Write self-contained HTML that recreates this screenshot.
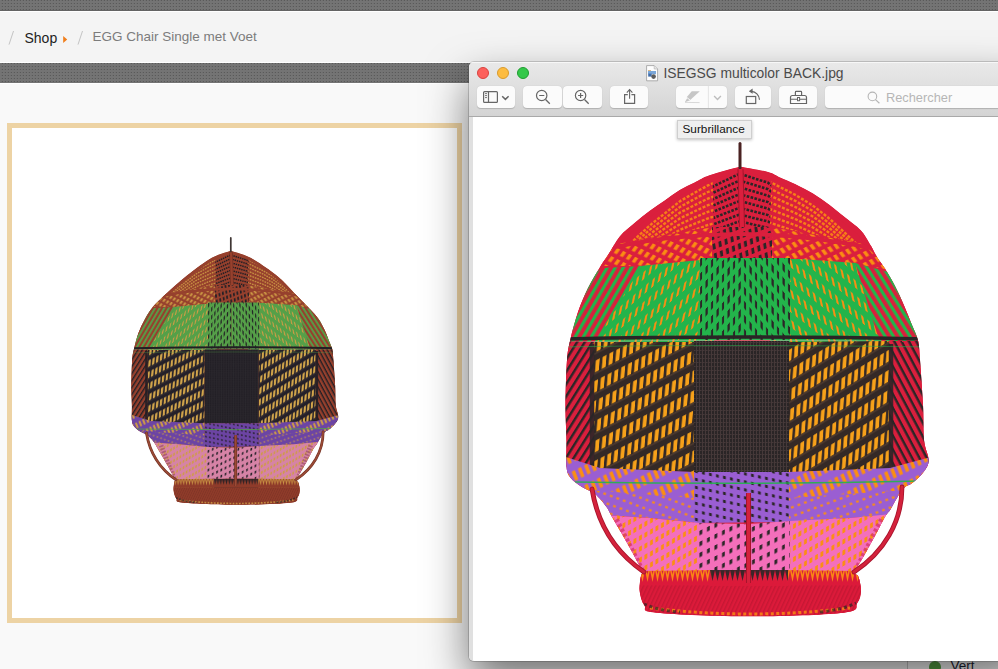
<!DOCTYPE html>
<html><head><meta charset="utf-8">
<style>
html,body{margin:0;padding:0}
body{width:998px;height:669px;overflow:hidden;background:#f9f9f9;position:relative;font-family:"Liberation Sans",sans-serif}
.a{position:absolute}
.btn{position:absolute;top:24px;height:22px;background:#fbfbfb;border-radius:4px;box-shadow:0 0.5px 1px rgba(0,0,0,0.18)}
</style></head><body>
<div class="a" style="left:0;top:0;width:998px;height:11px;overflow:hidden;background:#747474"><svg width="998" height="11" style="position:absolute;left:0;top:0;display:block">
<defs><pattern id="dpa" width="3" height="3" patternUnits="userSpaceOnUse">
<rect width="3" height="3" fill="#747474"/><rect x="1.5" y="0" width="2" height="1" fill="#5e5e5e" opacity=".45"/><rect x="2" y="0" width="1" height="1" fill="#5a5a5a"/>
</pattern></defs><rect width="998" height="11" fill="url(#dpa)"/></svg></div>
<div class="a" style="left:0;top:10px;width:998px;height:1px;background:#646464"></div>
<div class="a" style="left:0;top:11px;width:998px;height:1px;background:#fff"></div>
<div class="a" style="left:0;top:12px;width:998px;height:50px;background:#f4f4f4"></div>
<div class="a" style="left:0;top:62px;width:998px;height:1px;background:#fff"></div>
<div class="a" style="left:0;top:63px;width:998px;height:20px;overflow:hidden;background:#747474"><svg width="998" height="20" style="position:absolute;left:0;top:0;display:block">
<defs><pattern id="dpb" width="3" height="3" patternUnits="userSpaceOnUse">
<rect width="3" height="3" fill="#747474"/><rect x="1.5" y="0" width="2" height="1" fill="#5e5e5e" opacity=".45"/><rect x="2" y="0" width="1" height="1" fill="#5a5a5a"/>
</pattern></defs><rect width="998" height="20" fill="url(#dpb)"/></svg></div>
<div class="a" style="left:0;top:83px;width:998px;height:1px;background:#fff"></div>
<!-- breadcrumb -->
<svg class="a" style="left:0;top:25px" width="100" height="25"><path d="M13.5,6 L9,19.6" stroke="#c4c4c4" stroke-width="1"/><path d="M82.5,6 L78,19.6" stroke="#c4c4c4" stroke-width="1"/><path d="M63.2,11 L67.2,14.5 L63.2,18Z" fill="#f07d1a"/></svg>
<div class="a" style="left:24.5px;top:29.5px;font-size:14px;line-height:16px;color:#222">Shop</div>
<div class="a" style="left:92.5px;top:29px;font-size:13.5px;line-height:16px;color:#7c7c7c">EGG Chair Single met Voet</div>
<!-- product frame -->
<div class="a" style="left:7px;top:123px;width:445px;height:490px;border:5px solid #edd3a4;background:#fff"></div>
<svg class="a" style="left:0;top:0" width="998" height="669"><g transform="matrix(0.57,0,0,0.5646,-191.00,156.88)"><defs><clipPath id="clip_small"><path d="M739.5,166.7 C733.9,168.7 719.5,171.4 706.7,178.7 C693.9,186.0 676.0,199.9 662.5,210.6 C649.0,221.3 635.9,233.5 626.0,242.7 C616.1,251.9 609.2,258.4 603.0,266.0 C596.8,273.6 593.2,280.3 589.0,288.0 C584.8,295.7 581.1,303.5 578.0,312.0 C574.9,320.5 572.3,331.0 570.5,339.0 C568.7,347.0 567.8,349.0 567.0,360.0 C566.2,371.0 565.6,391.7 565.5,405.0 C565.4,418.3 566.3,429.7 566.5,440.0 C566.7,450.3 565.8,460.7 566.5,467.0 C567.2,473.3 568.1,474.7 570.7,478.0 C573.3,481.3 578.0,484.3 582.0,487.0 C586.0,489.7 590.9,490.7 595.0,494.0 C599.1,497.3 603.7,503.2 606.5,507.0 C609.3,510.8 609.4,512.5 612.0,517.0 C614.6,521.5 618.8,528.5 622.0,534.0 C625.2,539.5 628.3,545.2 631.0,550.0 C633.7,554.8 636.1,559.5 638.0,563.0 C639.9,566.5 641.9,568.7 642.4,571.0 C642.9,573.3 641.3,573.7 640.8,577.0 C640.3,580.3 639.0,586.2 639.6,591.0 C640.2,595.8 641.6,601.9 644.4,605.5 C647.2,609.1 638.9,610.9 656.5,612.7 C674.1,614.5 718.8,616.3 750.0,616.3 C781.2,616.3 826.1,614.9 844.0,612.7 C861.9,610.5 854.5,606.6 857.3,603.0 C860.1,599.4 860.8,595.3 861.0,591.0 C861.2,586.7 859.6,580.2 858.5,577.0 C857.4,573.8 853.8,575.4 854.6,572.0 C855.5,568.6 860.2,562.5 863.6,556.5 C867.0,550.5 871.2,542.9 874.8,536.3 C878.4,529.7 882.4,521.5 885.0,517.0 C887.6,512.5 888.5,512.6 890.5,509.4 C892.5,506.2 894.8,501.6 897.0,498.0 C899.2,494.4 901.3,490.6 904.0,488.0 C906.7,485.4 909.7,485.4 913.0,482.6 C916.3,479.8 921.4,475.2 924.0,471.4 C926.6,467.6 928.6,465.2 928.6,460.0 C928.6,454.8 924.9,449.2 924.0,440.0 C923.1,430.8 923.7,418.3 923.0,405.0 C922.3,391.7 920.8,370.8 920.0,360.0 C919.2,349.2 919.3,346.3 918.0,340.5 C916.7,334.7 914.3,330.8 912.0,325.0 C909.7,319.2 907.0,311.8 904.0,305.5 C901.0,299.2 898.3,293.1 894.0,287.0 C889.7,280.9 884.9,276.0 878.0,268.6 C871.1,261.2 862.3,252.4 852.8,242.7 C843.3,233.0 834.0,221.3 821.0,210.6 C808.0,199.9 788.1,186.0 774.7,178.7 C761.3,171.4 746.4,168.7 740.5,166.7 C734.6,164.7 745.1,164.7 739.5,166.7Z"/></clipPath>
<pattern id="od_small" width="6.8" height="20" patternUnits="userSpaceOnUse" patternTransform="skewY(-27) skewX(-5)">
 <rect width="6.8" height="20" fill="#25212a"/><rect x="0" y="16.5" width="6.8" height="1" fill="#3a3236"/><rect x="1.2" y="4" width="3.9" height="11.5" fill="#d3a64c"/></pattern>
<pattern id="odr_small" width="6.4" height="20" patternUnits="userSpaceOnUse" patternTransform="skewY(-31) skewX(-4)">
 <rect width="6.4" height="20" fill="#25212a"/><rect x="0" y="16.5" width="6.4" height="1" fill="#3a3236"/><rect x="1.1" y="4" width="3.8" height="11.5" fill="#d3a64c"/></pattern>
<pattern id="bsq_small" width="3" height="4" patternUnits="userSpaceOnUse">
 <rect width="3" height="4" fill="#221f25"/><rect x="0" y="0" width="1" height="4" fill="#2e2a30"/><rect x="1" y="2" width="1.5" height="1" fill="#2e2a30"/></pattern>
<pattern id="og_small" width="6.5" height="15" patternUnits="userSpaceOnUse" patternTransform="skewY(-40) skewX(-14)">
 <rect width="6.5" height="15" fill="#55a048"/><rect x="1" y="2" width="2.4" height="7.5" fill="#cf9c45"/></pattern>
<pattern id="ogr_small" width="6.5" height="15" patternUnits="userSpaceOnUse" patternTransform="skewY(38) skewX(14)">
 <rect width="6.5" height="15" fill="#55a048"/><rect x="1" y="2" width="2.4" height="7.5" fill="#cf9c45"/></pattern>
<pattern id="bg_small" width="5.5" height="14" patternUnits="userSpaceOnUse" patternTransform="skewY(-50)">
 <rect width="5.5" height="14" fill="#55a048"/><rect x="1.5" y="2" width="2.2" height="7.5" fill="#221f25"/></pattern>
<pattern id="bgr_small" width="5.5" height="14" patternUnits="userSpaceOnUse" patternTransform="skewY(50)">
 <rect width="5.5" height="14" fill="#55a048"/><rect x="1.5" y="2" width="2.2" height="7.5" fill="#221f25"/></pattern>
<pattern id="or_small" width="6" height="11" patternUnits="userSpaceOnUse" patternTransform="skewY(26) skewX(-28)">
 <rect width="6" height="11" fill="#96402d"/><rect x="1" y="2" width="3" height="6.5" fill="#cf9c45"/></pattern>
<pattern id="orr_small" width="6" height="11" patternUnits="userSpaceOnUse" patternTransform="skewY(-26) skewX(28)">
 <rect width="6" height="11" fill="#96402d"/><rect x="1" y="2" width="3" height="6.5" fill="#cf9c45"/></pattern>
<pattern id="br_small" width="6" height="10" patternUnits="userSpaceOnUse" patternTransform="skewY(-22) skewX(8)">
 <rect width="6" height="10" fill="#96402d"/><rect x="1.5" y="2" width="2.8" height="6" fill="#221f25"/></pattern>
<pattern id="rg_small" width="7" height="7" patternUnits="userSpaceOnUse" patternTransform="rotate(-60)">
 <rect width="7" height="7" fill="#96402d"/><rect x="0" y="0" width="7" height="3.2" fill="#55a048"/></pattern>
<pattern id="rgr_small" width="7" height="7" patternUnits="userSpaceOnUse" patternTransform="rotate(58)">
 <rect width="7" height="7" fill="#96402d"/><rect x="0" y="0" width="7" height="3.2" fill="#55a048"/></pattern>
<pattern id="rb_small" width="6.5" height="6.5" patternUnits="userSpaceOnUse" patternTransform="rotate(-58)">
 <rect width="6.5" height="6.5" fill="#96402d"/><rect x="0" y="0" width="6.5" height="2.4" fill="#221f25"/></pattern>
<pattern id="rbr_small" width="6.5" height="6.5" patternUnits="userSpaceOnUse" patternTransform="rotate(62)">
 <rect width="6.5" height="6.5" fill="#96402d"/><rect x="0" y="0" width="6.5" height="2.4" fill="#221f25"/></pattern>
<pattern id="op_small" width="6.5" height="9" patternUnits="userSpaceOnUse" patternTransform="skewY(20) skewX(-20)">
 <rect width="6.5" height="9" fill="#6c44a4"/><rect x="1" y="2.5" width="2.6" height="2.2" fill="#cf9c45"/></pattern>
<pattern id="opr_small" width="6.5" height="9" patternUnits="userSpaceOnUse" patternTransform="skewY(-20) skewX(20)">
 <rect width="6.5" height="9" fill="#6c44a4"/><rect x="1" y="2.5" width="2.6" height="2.2" fill="#cf9c45"/></pattern>
<pattern id="opu_small" width="6.2" height="20" patternUnits="userSpaceOnUse" patternTransform="skewY(-27) skewX(18)">
 <rect width="6.2" height="20" fill="#6c44a4"/><rect x="1.3" y="3" width="3.2" height="11" fill="#cf9c45"/></pattern>
<pattern id="bp_small" width="7" height="8" patternUnits="userSpaceOnUse" patternTransform="skewY(12)">
 <rect width="7" height="8" fill="#6c44a4"/><rect x="2" y="2" width="2.8" height="3" fill="#221f25"/></pattern>
<pattern id="opk_small" width="5.5" height="11" patternUnits="userSpaceOnUse" patternTransform="skewY(-30)">
 <rect width="5.5" height="11" fill="#d683a6"/><rect x="1" y="3" width="2.8" height="5" fill="#cf9c45"/></pattern>
<pattern id="opkr_small" width="5.5" height="11" patternUnits="userSpaceOnUse" patternTransform="skewY(-30)">
 <rect width="5.5" height="11" fill="#d683a6"/><rect x="1" y="3" width="2.8" height="5" fill="#cf9c45"/></pattern>
<pattern id="bpk_small" width="7.5" height="11" patternUnits="userSpaceOnUse" patternTransform="skewY(-26)">
 <rect width="7.5" height="11" fill="#d683a6"/><rect x="2" y="3" width="2.8" height="4.5" fill="#221f25"/></pattern>
<pattern id="bpkr_small" width="7.5" height="11" patternUnits="userSpaceOnUse" patternTransform="skewY(-26)">
 <rect width="7.5" height="11" fill="#d683a6"/><rect x="2" y="3" width="2.8" height="4.5" fill="#221f25"/></pattern>
<pattern id="zz_small" width="5" height="16" patternUnits="userSpaceOnUse" patternTransform="translate(0,570)">
 <rect width="5" height="16" fill="#8f3b2a"/><path d="M0,0 L2.5,12 L5,0Z" fill="#cf9c45"/><path d="M1.5,0 L2.5,5 L3.5,0Z" fill="#96402d"/></pattern>
<pattern id="zzb_small" width="5" height="16" patternUnits="userSpaceOnUse" patternTransform="translate(0,570)">
 <rect width="5" height="16" fill="#8f3b2a"/><path d="M0,0 L2.5,11 L5,0Z" fill="#221f25"/></pattern>
<pattern id="rbase_small" width="4" height="5" patternUnits="userSpaceOnUse" patternTransform="skewX(-25)">
 <rect width="4" height="5" fill="#8f3b2a"/><rect x="0" y="0" width="1.5" height="5" fill="#6e2f22" opacity="0.45"/></pattern>
</defs>
<g clip-path="url(#clip_small)"><path d="M739.5,166.7 C733.9,168.7 719.5,171.4 706.7,178.7 C693.9,186.0 676.0,199.9 662.5,210.6 C649.0,221.3 635.9,233.5 626.0,242.7 C616.1,251.9 609.2,258.4 603.0,266.0 C596.8,273.6 593.2,280.3 589.0,288.0 C584.8,295.7 581.1,303.5 578.0,312.0 C574.9,320.5 572.3,331.0 570.5,339.0 C568.7,347.0 567.8,349.0 567.0,360.0 C566.2,371.0 565.6,391.7 565.5,405.0 C565.4,418.3 566.3,429.7 566.5,440.0 C566.7,450.3 565.8,460.7 566.5,467.0 C567.2,473.3 568.1,474.7 570.7,478.0 C573.3,481.3 578.0,484.3 582.0,487.0 C586.0,489.7 590.9,490.7 595.0,494.0 C599.1,497.3 603.7,503.2 606.5,507.0 C609.3,510.8 609.4,512.5 612.0,517.0 C614.6,521.5 618.8,528.5 622.0,534.0 C625.2,539.5 628.3,545.2 631.0,550.0 C633.7,554.8 636.1,559.5 638.0,563.0 C639.9,566.5 641.9,568.7 642.4,571.0 C642.9,573.3 641.3,573.7 640.8,577.0 C640.3,580.3 639.0,586.2 639.6,591.0 C640.2,595.8 641.6,601.9 644.4,605.5 C647.2,609.1 638.9,610.9 656.5,612.7 C674.1,614.5 718.8,616.3 750.0,616.3 C781.2,616.3 826.1,614.9 844.0,612.7 C861.9,610.5 854.5,606.6 857.3,603.0 C860.1,599.4 860.8,595.3 861.0,591.0 C861.2,586.7 859.6,580.2 858.5,577.0 C857.4,573.8 853.8,575.4 854.6,572.0 C855.5,568.6 860.2,562.5 863.6,556.5 C867.0,550.5 871.2,542.9 874.8,536.3 C878.4,529.7 882.4,521.5 885.0,517.0 C887.6,512.5 888.5,512.6 890.5,509.4 C892.5,506.2 894.8,501.6 897.0,498.0 C899.2,494.4 901.3,490.6 904.0,488.0 C906.7,485.4 909.7,485.4 913.0,482.6 C916.3,479.8 921.4,475.2 924.0,471.4 C926.6,467.6 928.6,465.2 928.6,460.0 C928.6,454.8 924.9,449.2 924.0,440.0 C923.1,430.8 923.7,418.3 923.0,405.0 C922.3,391.7 920.8,370.8 920.0,360.0 C919.2,349.2 919.3,346.3 918.0,340.5 C916.7,334.7 914.3,330.8 912.0,325.0 C909.7,319.2 907.0,311.8 904.0,305.5 C901.0,299.2 898.3,293.1 894.0,287.0 C889.7,280.9 884.9,276.0 878.0,268.6 C871.1,261.2 862.3,252.4 852.8,242.7 C843.3,233.0 834.0,221.3 821.0,210.6 C808.0,199.9 788.1,186.0 774.7,178.7 C761.3,171.4 746.4,168.7 740.5,166.7 C734.6,164.7 745.1,164.7 739.5,166.7Z" fill="#96402d"/>
<clipPath id="capL_small"><path d="M560.0,160.0 L712.0,160.0 L714.0,226.0 L617.0,244.0 L560.0,262.0Z"/></clipPath>
<clipPath id="capR_small"><path d="M772.0,160.0 L935.0,160.0 L935.0,262.0 L864.0,244.0 L770.0,226.0Z"/></clipPath>
<clipPath id="capC_small"><path d="M712.0,160.0 L772.0,160.0 L770.0,227.0 L714.0,227.0Z"/></clipPath>
<g clip-path="url(#capL_small)"><path d="M568.0,390.1 L572.0,366.6 L576.0,350.1 L580.0,336.3 L584.0,325.2 L588.0,314.2 L592.0,306.1 L596.0,298.1 L600.0,290.0 L604.0,283.0 L608.0,276.0 L612.0,268.9 L616.0,261.7 L620.0,254.5 L624.0,250.4 L628.0,246.2 L632.0,242.1 L636.0,238.1 L640.0,234.4 L644.0,230.8 L648.0,227.1 L652.0,223.6 L656.0,220.4 L660.0,217.2 L664.0,214.0 L668.0,210.8 L672.0,207.6 L676.0,204.4 L680.0,201.2 L684.0,198.9 L688.0,196.6 L692.0,194.3 L696.0,192.0 L700.0,189.8 L704.0,187.6 L708.0,185.4 L712.0,183.7 L716.0,182.4 L720.0,181.1 L724.0,179.8 L728.0,178.5 L732.0,177.2 L736.0,175.8 L740.0,174.8 L744.0,175.7 L748.0,176.5 L752.0,177.4 L756.0,178.2 L760.0,179.1 L764.0,179.9 L768.0,180.8 L772.0,182.9 L776.0,185.0 L780.0,187.1 L784.0,189.1 L788.0,191.1 L792.0,193.1 L796.0,195.2 L800.0,197.7 L804.0,200.1 L808.0,202.6 L812.0,205.0 L816.0,208.0 L820.0,211.2 L824.0,214.3 L828.0,217.5 L832.0,221.0 L836.0,224.7 L840.0,228.4 L844.0,232.0 L848.0,235.8 L852.0,239.6 L856.0,243.4 L860.0,247.2 L864.0,253.5 L868.0,260.3 L872.0,268.0 L876.0,276.3 L880.0,283.5 L884.0,290.2 L888.0,297.9 L892.0,305.9 L896.0,314.4 L900.0,324.4 L904.0,334.3 L908.0,345.5 L912.0,356.7 L916.0,368.6 M568.0,385.3 L572.0,363.1 L576.0,347.5 L580.0,334.4 L584.0,324.0 L588.0,313.6 L592.0,306.0 L596.0,298.4 L600.0,290.8 L604.0,284.2 L608.0,277.6 L612.0,270.8 L616.0,264.0 L620.0,257.3 L624.0,253.4 L628.0,249.4 L632.0,245.5 L636.0,241.8 L640.0,238.3 L644.0,234.8 L648.0,231.3 L652.0,228.1 L656.0,225.1 L660.0,222.1 L664.0,219.0 L668.0,216.0 L672.0,212.9 L676.0,209.9 L680.0,206.9 L684.0,204.7 L688.0,202.6 L692.0,200.4 L696.0,198.2 L700.0,196.1 L704.0,194.0 L708.0,192.0 L712.0,190.4 L716.0,189.2 L720.0,187.9 L724.0,186.7 L728.0,185.4 L732.0,184.2 L736.0,183.0 L740.0,182.0 L744.0,182.8 L748.0,183.6 L752.0,184.4 L756.0,185.2 L760.0,186.0 L764.0,186.8 L768.0,187.7 L772.0,189.6 L776.0,191.6 L780.0,193.6 L784.0,195.5 L788.0,197.4 L792.0,199.3 L796.0,201.3 L800.0,203.6 L804.0,205.9 L808.0,208.2 L812.0,210.5 L816.0,213.3 L820.0,216.3 L824.0,219.3 L828.0,222.3 L832.0,225.6 L836.0,229.1 L840.0,232.6 L844.0,236.0 L848.0,239.6 L852.0,243.2 L856.0,246.8 L860.0,250.3 L864.0,256.3 L868.0,262.8 L872.0,270.0 L876.0,277.8 L880.0,284.6 L884.0,290.9 L888.0,298.2 L892.0,305.8 L896.0,313.8 L900.0,323.2 L904.0,332.6 L908.0,343.2 L912.0,353.8 L916.0,365.0 M568.0,380.4 L572.0,359.6 L576.0,344.9 L580.0,332.6 L584.0,322.8 L588.0,313.0 L592.0,305.8 L596.0,298.7 L600.0,291.5 L604.0,285.3 L608.0,279.1 L612.0,272.8 L616.0,266.3 L620.0,260.0 L624.0,256.3 L628.0,252.6 L632.0,249.0 L636.0,245.4 L640.0,242.2 L644.0,238.9 L648.0,235.6 L652.0,232.6 L656.0,229.7 L660.0,226.9 L664.0,224.0 L668.0,221.2 L672.0,218.3 L676.0,215.4 L680.0,212.6 L684.0,210.6 L688.0,208.5 L692.0,206.5 L696.0,204.5 L700.0,202.5 L704.0,200.5 L708.0,198.6 L712.0,197.1 L716.0,195.9 L720.0,194.8 L724.0,193.6 L728.0,192.4 L732.0,191.3 L736.0,190.1 L740.0,189.2 L744.0,190.0 L748.0,190.7 L752.0,191.5 L756.0,192.2 L760.0,193.0 L764.0,193.8 L768.0,194.5 L772.0,196.4 L776.0,198.3 L780.0,200.1 L784.0,201.9 L788.0,203.7 L792.0,205.4 L796.0,207.3 L800.0,209.5 L804.0,211.7 L808.0,213.9 L812.0,216.0 L816.0,218.7 L820.0,221.5 L824.0,224.3 L828.0,227.1 L832.0,230.2 L836.0,233.5 L840.0,236.8 L844.0,240.0 L848.0,243.4 L852.0,246.7 L856.0,250.1 L860.0,253.5 L864.0,259.1 L868.0,265.2 L872.0,272.0 L876.0,279.3 L880.0,285.7 L884.0,291.7 L888.0,298.5 L892.0,305.6 L896.0,313.2 L900.0,322.0 L904.0,330.9 L908.0,340.8 L912.0,350.8 L916.0,361.3 M568.0,375.6 L572.0,356.0 L576.0,342.3 L580.0,330.8 L584.0,321.6 L588.0,312.4 L592.0,305.7 L596.0,299.0 L600.0,292.3 L604.0,286.5 L608.0,280.7 L612.0,274.7 L616.0,268.7 L620.0,262.7 L624.0,259.3 L628.0,255.8 L632.0,252.4 L636.0,249.1 L640.0,246.0 L644.0,243.0 L648.0,239.9 L652.0,237.0 L656.0,234.4 L660.0,231.7 L664.0,229.0 L668.0,226.3 L672.0,223.7 L676.0,221.0 L680.0,218.4 L684.0,216.4 L688.0,214.5 L692.0,212.6 L696.0,210.7 L700.0,208.8 L704.0,207.0 L708.0,205.2 L712.0,203.8 L716.0,202.7 L720.0,201.6 L724.0,200.5 L728.0,199.4 L732.0,198.3 L736.0,197.3 L740.0,196.4 L744.0,197.1 L748.0,197.8 L752.0,198.5 L756.0,199.2 L760.0,199.9 L764.0,200.7 L768.0,201.4 L772.0,203.1 L776.0,204.9 L780.0,206.6 L784.0,208.3 L788.0,210.0 L792.0,211.6 L796.0,213.4 L800.0,215.4 L804.0,217.5 L808.0,219.5 L812.0,221.5 L816.0,224.0 L820.0,226.7 L824.0,229.3 L828.0,231.9 L832.0,234.8 L836.0,237.9 L840.0,241.0 L844.0,244.0 L848.0,247.2 L852.0,250.3 L856.0,253.5 L860.0,256.6 L864.0,261.9 L868.0,267.6 L872.0,274.0 L876.0,280.9 L880.0,286.8 L884.0,292.4 L888.0,298.8 L892.0,305.5 L896.0,312.6 L900.0,320.9 L904.0,329.2 L908.0,338.5 L912.0,347.8 L916.0,357.7 M568.0,370.7 L572.0,352.5 L576.0,339.7 L580.0,328.9 L584.0,320.4 L588.0,311.8 L592.0,305.6 L596.0,299.3 L600.0,293.1 L604.0,287.6 L608.0,282.2 L612.0,276.6 L616.0,271.0 L620.0,265.5 L624.0,262.3 L628.0,259.0 L632.0,255.8 L636.0,252.7 L640.0,249.9 L644.0,247.0 L648.0,244.2 L652.0,241.5 L656.0,239.0 L660.0,236.5 L664.0,234.0 L668.0,231.5 L672.0,229.0 L676.0,226.5 L680.0,224.1 L684.0,222.3 L688.0,220.5 L692.0,218.7 L696.0,216.9 L700.0,215.2 L704.0,213.5 L708.0,211.8 L712.0,210.5 L716.0,209.5 L720.0,208.4 L724.0,207.4 L728.0,206.4 L732.0,205.4 L736.0,204.4 L740.0,203.6 L744.0,204.2 L748.0,204.9 L752.0,205.6 L756.0,206.2 L760.0,206.9 L764.0,207.6 L768.0,208.2 L772.0,209.9 L776.0,211.5 L780.0,213.1 L784.0,214.7 L788.0,216.2 L792.0,217.8 L796.0,219.4 L800.0,221.3 L804.0,223.2 L808.0,225.1 L812.0,227.0 L816.0,229.4 L820.0,231.8 L824.0,234.3 L828.0,236.7 L832.0,239.4 L836.0,242.3 L840.0,245.2 L844.0,248.0 L848.0,251.0 L852.0,253.9 L856.0,256.8 L860.0,259.8 L864.0,264.7 L868.0,270.0 L872.0,275.9 L876.0,282.4 L880.0,288.0 L884.0,293.2 L888.0,299.1 L892.0,305.4 L896.0,312.0 L900.0,319.7 L904.0,327.4 L908.0,336.1 L912.0,344.8 L916.0,354.1 M568.0,365.9 L572.0,349.0 L576.0,337.1 L580.0,327.1 L584.0,319.2 L588.0,311.2 L592.0,305.4 L596.0,299.6 L600.0,293.8 L604.0,288.8 L608.0,283.7 L612.0,278.6 L616.0,273.4 L620.0,268.2 L624.0,265.2 L628.0,262.2 L632.0,259.3 L636.0,256.4 L640.0,253.7 L644.0,251.1 L648.0,248.4 L652.0,246.0 L656.0,243.7 L660.0,241.3 L664.0,239.0 L668.0,236.7 L672.0,234.4 L676.0,232.1 L680.0,229.8 L684.0,228.1 L688.0,226.5 L692.0,224.8 L696.0,223.2 L700.0,221.6 L704.0,220.0 L708.0,218.4 L712.0,217.2 L716.0,216.2 L720.0,215.3 L724.0,214.4 L728.0,213.4 L732.0,212.5 L736.0,211.5 L740.0,210.8 L744.0,211.4 L748.0,212.0 L752.0,212.6 L756.0,213.2 L760.0,213.9 L764.0,214.5 L768.0,215.1 L772.0,216.6 L776.0,218.1 L780.0,219.6 L784.0,221.1 L788.0,222.5 L792.0,224.0 L796.0,225.5 L800.0,227.2 L804.0,229.0 L808.0,230.8 L812.0,232.5 L816.0,234.7 L820.0,237.0 L824.0,239.3 L828.0,241.5 L832.0,244.1 L836.0,246.7 L840.0,249.4 L844.0,252.0 L848.0,254.7 L852.0,257.5 L856.0,260.2 L860.0,262.9 L864.0,267.5 L868.0,272.4 L872.0,277.9 L876.0,283.9 L880.0,289.1 L884.0,293.9 L888.0,299.5 L892.0,305.2 L896.0,311.3 L900.0,318.5 L904.0,325.7 L908.0,333.8 L912.0,341.9 L916.0,350.4 M568.0,361.1 L572.0,345.5 L576.0,334.5 L580.0,325.3 L584.0,317.9 L588.0,310.6 L592.0,305.3 L596.0,299.9 L600.0,294.6 L604.0,289.9 L608.0,285.3 L612.0,280.5 L616.0,275.7 L620.0,270.9 L624.0,268.2 L628.0,265.5 L632.0,262.7 L636.0,260.0 L640.0,257.6 L644.0,255.2 L648.0,252.7 L652.0,250.4 L656.0,248.3 L660.0,246.2 L664.0,244.0 L668.0,241.9 L672.0,239.8 L676.0,237.6 L680.0,235.5 L684.0,234.0 L688.0,232.4 L692.0,230.9 L696.0,229.4 L700.0,227.9 L704.0,226.5 L708.0,225.0 L712.0,223.9 L716.0,223.0 L720.0,222.1 L724.0,221.3 L728.0,220.4 L732.0,219.5 L736.0,218.7 L740.0,218.0 L744.0,218.5 L748.0,219.1 L752.0,219.7 L756.0,220.2 L760.0,220.8 L764.0,221.4 L768.0,222.0 L772.0,223.4 L776.0,224.8 L780.0,226.2 L784.0,227.5 L788.0,228.8 L792.0,230.1 L796.0,231.5 L800.0,233.2 L804.0,234.8 L808.0,236.4 L812.0,238.1 L816.0,240.0 L820.0,242.1 L824.0,244.2 L828.0,246.3 L832.0,248.7 L836.0,251.1 L840.0,253.6 L844.0,256.0 L848.0,258.5 L852.0,261.0 L856.0,263.6 L860.0,266.1 L864.0,270.3 L868.0,274.8 L872.0,279.9 L876.0,285.4 L880.0,290.2 L884.0,294.7 L888.0,299.8 L892.0,305.1 L896.0,310.7 L900.0,317.4 L904.0,324.0 L908.0,331.4 L912.0,338.9 L916.0,346.8 M568.0,356.2 L572.0,341.9 L576.0,331.9 L580.0,323.5 L584.0,316.7 L588.0,310.0 L592.0,305.1 L596.0,300.2 L600.0,295.3 L604.0,291.1 L608.0,286.8 L612.0,282.4 L616.0,278.0 L620.0,273.7 L624.0,271.2 L628.0,268.7 L632.0,266.1 L636.0,263.7 L640.0,261.5 L644.0,259.2 L648.0,257.0 L652.0,254.9 L656.0,252.9 L660.0,251.0 L664.0,249.0 L668.0,247.1 L672.0,245.1 L676.0,243.2 L680.0,241.2 L684.0,239.8 L688.0,238.4 L692.0,237.0 L696.0,235.6 L700.0,234.3 L704.0,232.9 L708.0,231.6 L712.0,230.6 L716.0,229.8 L720.0,229.0 L724.0,228.2 L728.0,227.4 L732.0,226.6 L736.0,225.8 L740.0,225.2 L744.0,225.7 L748.0,226.2 L752.0,226.7 L756.0,227.2 L760.0,227.8 L764.0,228.3 L768.0,228.8 L772.0,230.1 L776.0,231.4 L780.0,232.7 L784.0,233.9 L788.0,235.1 L792.0,236.3 L796.0,237.6 L800.0,239.1 L804.0,240.6 L808.0,242.1 L812.0,243.6 L816.0,245.4 L820.0,247.3 L824.0,249.2 L828.0,251.1 L832.0,253.3 L836.0,255.5 L840.0,257.8 L844.0,260.0 L848.0,262.3 L852.0,264.6 L856.0,266.9 L860.0,269.2 L864.0,273.1 L868.0,277.2 L872.0,281.9 L876.0,286.9 L880.0,291.3 L884.0,295.4 L888.0,300.1 L892.0,305.0 L896.0,310.1 L900.0,316.2 L904.0,322.3 L908.0,329.1 L912.0,335.9 L916.0,343.1" stroke="#cf9c45" stroke-width="2.4" stroke-dasharray="3 1.6" fill="none" opacity="0.85"/></g>
<g clip-path="url(#capR_small)"><path d="M568.0,390.1 L572.0,366.6 L576.0,350.1 L580.0,336.3 L584.0,325.2 L588.0,314.2 L592.0,306.1 L596.0,298.1 L600.0,290.0 L604.0,283.0 L608.0,276.0 L612.0,268.9 L616.0,261.7 L620.0,254.5 L624.0,250.4 L628.0,246.2 L632.0,242.1 L636.0,238.1 L640.0,234.4 L644.0,230.8 L648.0,227.1 L652.0,223.6 L656.0,220.4 L660.0,217.2 L664.0,214.0 L668.0,210.8 L672.0,207.6 L676.0,204.4 L680.0,201.2 L684.0,198.9 L688.0,196.6 L692.0,194.3 L696.0,192.0 L700.0,189.8 L704.0,187.6 L708.0,185.4 L712.0,183.7 L716.0,182.4 L720.0,181.1 L724.0,179.8 L728.0,178.5 L732.0,177.2 L736.0,175.8 L740.0,174.8 L744.0,175.7 L748.0,176.5 L752.0,177.4 L756.0,178.2 L760.0,179.1 L764.0,179.9 L768.0,180.8 L772.0,182.9 L776.0,185.0 L780.0,187.1 L784.0,189.1 L788.0,191.1 L792.0,193.1 L796.0,195.2 L800.0,197.7 L804.0,200.1 L808.0,202.6 L812.0,205.0 L816.0,208.0 L820.0,211.2 L824.0,214.3 L828.0,217.5 L832.0,221.0 L836.0,224.7 L840.0,228.4 L844.0,232.0 L848.0,235.8 L852.0,239.6 L856.0,243.4 L860.0,247.2 L864.0,253.5 L868.0,260.3 L872.0,268.0 L876.0,276.3 L880.0,283.5 L884.0,290.2 L888.0,297.9 L892.0,305.9 L896.0,314.4 L900.0,324.4 L904.0,334.3 L908.0,345.5 L912.0,356.7 L916.0,368.6 M568.0,385.3 L572.0,363.1 L576.0,347.5 L580.0,334.4 L584.0,324.0 L588.0,313.6 L592.0,306.0 L596.0,298.4 L600.0,290.8 L604.0,284.2 L608.0,277.6 L612.0,270.8 L616.0,264.0 L620.0,257.3 L624.0,253.4 L628.0,249.4 L632.0,245.5 L636.0,241.8 L640.0,238.3 L644.0,234.8 L648.0,231.3 L652.0,228.1 L656.0,225.1 L660.0,222.1 L664.0,219.0 L668.0,216.0 L672.0,212.9 L676.0,209.9 L680.0,206.9 L684.0,204.7 L688.0,202.6 L692.0,200.4 L696.0,198.2 L700.0,196.1 L704.0,194.0 L708.0,192.0 L712.0,190.4 L716.0,189.2 L720.0,187.9 L724.0,186.7 L728.0,185.4 L732.0,184.2 L736.0,183.0 L740.0,182.0 L744.0,182.8 L748.0,183.6 L752.0,184.4 L756.0,185.2 L760.0,186.0 L764.0,186.8 L768.0,187.7 L772.0,189.6 L776.0,191.6 L780.0,193.6 L784.0,195.5 L788.0,197.4 L792.0,199.3 L796.0,201.3 L800.0,203.6 L804.0,205.9 L808.0,208.2 L812.0,210.5 L816.0,213.3 L820.0,216.3 L824.0,219.3 L828.0,222.3 L832.0,225.6 L836.0,229.1 L840.0,232.6 L844.0,236.0 L848.0,239.6 L852.0,243.2 L856.0,246.8 L860.0,250.3 L864.0,256.3 L868.0,262.8 L872.0,270.0 L876.0,277.8 L880.0,284.6 L884.0,290.9 L888.0,298.2 L892.0,305.8 L896.0,313.8 L900.0,323.2 L904.0,332.6 L908.0,343.2 L912.0,353.8 L916.0,365.0 M568.0,380.4 L572.0,359.6 L576.0,344.9 L580.0,332.6 L584.0,322.8 L588.0,313.0 L592.0,305.8 L596.0,298.7 L600.0,291.5 L604.0,285.3 L608.0,279.1 L612.0,272.8 L616.0,266.3 L620.0,260.0 L624.0,256.3 L628.0,252.6 L632.0,249.0 L636.0,245.4 L640.0,242.2 L644.0,238.9 L648.0,235.6 L652.0,232.6 L656.0,229.7 L660.0,226.9 L664.0,224.0 L668.0,221.2 L672.0,218.3 L676.0,215.4 L680.0,212.6 L684.0,210.6 L688.0,208.5 L692.0,206.5 L696.0,204.5 L700.0,202.5 L704.0,200.5 L708.0,198.6 L712.0,197.1 L716.0,195.9 L720.0,194.8 L724.0,193.6 L728.0,192.4 L732.0,191.3 L736.0,190.1 L740.0,189.2 L744.0,190.0 L748.0,190.7 L752.0,191.5 L756.0,192.2 L760.0,193.0 L764.0,193.8 L768.0,194.5 L772.0,196.4 L776.0,198.3 L780.0,200.1 L784.0,201.9 L788.0,203.7 L792.0,205.4 L796.0,207.3 L800.0,209.5 L804.0,211.7 L808.0,213.9 L812.0,216.0 L816.0,218.7 L820.0,221.5 L824.0,224.3 L828.0,227.1 L832.0,230.2 L836.0,233.5 L840.0,236.8 L844.0,240.0 L848.0,243.4 L852.0,246.7 L856.0,250.1 L860.0,253.5 L864.0,259.1 L868.0,265.2 L872.0,272.0 L876.0,279.3 L880.0,285.7 L884.0,291.7 L888.0,298.5 L892.0,305.6 L896.0,313.2 L900.0,322.0 L904.0,330.9 L908.0,340.8 L912.0,350.8 L916.0,361.3 M568.0,375.6 L572.0,356.0 L576.0,342.3 L580.0,330.8 L584.0,321.6 L588.0,312.4 L592.0,305.7 L596.0,299.0 L600.0,292.3 L604.0,286.5 L608.0,280.7 L612.0,274.7 L616.0,268.7 L620.0,262.7 L624.0,259.3 L628.0,255.8 L632.0,252.4 L636.0,249.1 L640.0,246.0 L644.0,243.0 L648.0,239.9 L652.0,237.0 L656.0,234.4 L660.0,231.7 L664.0,229.0 L668.0,226.3 L672.0,223.7 L676.0,221.0 L680.0,218.4 L684.0,216.4 L688.0,214.5 L692.0,212.6 L696.0,210.7 L700.0,208.8 L704.0,207.0 L708.0,205.2 L712.0,203.8 L716.0,202.7 L720.0,201.6 L724.0,200.5 L728.0,199.4 L732.0,198.3 L736.0,197.3 L740.0,196.4 L744.0,197.1 L748.0,197.8 L752.0,198.5 L756.0,199.2 L760.0,199.9 L764.0,200.7 L768.0,201.4 L772.0,203.1 L776.0,204.9 L780.0,206.6 L784.0,208.3 L788.0,210.0 L792.0,211.6 L796.0,213.4 L800.0,215.4 L804.0,217.5 L808.0,219.5 L812.0,221.5 L816.0,224.0 L820.0,226.7 L824.0,229.3 L828.0,231.9 L832.0,234.8 L836.0,237.9 L840.0,241.0 L844.0,244.0 L848.0,247.2 L852.0,250.3 L856.0,253.5 L860.0,256.6 L864.0,261.9 L868.0,267.6 L872.0,274.0 L876.0,280.9 L880.0,286.8 L884.0,292.4 L888.0,298.8 L892.0,305.5 L896.0,312.6 L900.0,320.9 L904.0,329.2 L908.0,338.5 L912.0,347.8 L916.0,357.7 M568.0,370.7 L572.0,352.5 L576.0,339.7 L580.0,328.9 L584.0,320.4 L588.0,311.8 L592.0,305.6 L596.0,299.3 L600.0,293.1 L604.0,287.6 L608.0,282.2 L612.0,276.6 L616.0,271.0 L620.0,265.5 L624.0,262.3 L628.0,259.0 L632.0,255.8 L636.0,252.7 L640.0,249.9 L644.0,247.0 L648.0,244.2 L652.0,241.5 L656.0,239.0 L660.0,236.5 L664.0,234.0 L668.0,231.5 L672.0,229.0 L676.0,226.5 L680.0,224.1 L684.0,222.3 L688.0,220.5 L692.0,218.7 L696.0,216.9 L700.0,215.2 L704.0,213.5 L708.0,211.8 L712.0,210.5 L716.0,209.5 L720.0,208.4 L724.0,207.4 L728.0,206.4 L732.0,205.4 L736.0,204.4 L740.0,203.6 L744.0,204.2 L748.0,204.9 L752.0,205.6 L756.0,206.2 L760.0,206.9 L764.0,207.6 L768.0,208.2 L772.0,209.9 L776.0,211.5 L780.0,213.1 L784.0,214.7 L788.0,216.2 L792.0,217.8 L796.0,219.4 L800.0,221.3 L804.0,223.2 L808.0,225.1 L812.0,227.0 L816.0,229.4 L820.0,231.8 L824.0,234.3 L828.0,236.7 L832.0,239.4 L836.0,242.3 L840.0,245.2 L844.0,248.0 L848.0,251.0 L852.0,253.9 L856.0,256.8 L860.0,259.8 L864.0,264.7 L868.0,270.0 L872.0,275.9 L876.0,282.4 L880.0,288.0 L884.0,293.2 L888.0,299.1 L892.0,305.4 L896.0,312.0 L900.0,319.7 L904.0,327.4 L908.0,336.1 L912.0,344.8 L916.0,354.1 M568.0,365.9 L572.0,349.0 L576.0,337.1 L580.0,327.1 L584.0,319.2 L588.0,311.2 L592.0,305.4 L596.0,299.6 L600.0,293.8 L604.0,288.8 L608.0,283.7 L612.0,278.6 L616.0,273.4 L620.0,268.2 L624.0,265.2 L628.0,262.2 L632.0,259.3 L636.0,256.4 L640.0,253.7 L644.0,251.1 L648.0,248.4 L652.0,246.0 L656.0,243.7 L660.0,241.3 L664.0,239.0 L668.0,236.7 L672.0,234.4 L676.0,232.1 L680.0,229.8 L684.0,228.1 L688.0,226.5 L692.0,224.8 L696.0,223.2 L700.0,221.6 L704.0,220.0 L708.0,218.4 L712.0,217.2 L716.0,216.2 L720.0,215.3 L724.0,214.4 L728.0,213.4 L732.0,212.5 L736.0,211.5 L740.0,210.8 L744.0,211.4 L748.0,212.0 L752.0,212.6 L756.0,213.2 L760.0,213.9 L764.0,214.5 L768.0,215.1 L772.0,216.6 L776.0,218.1 L780.0,219.6 L784.0,221.1 L788.0,222.5 L792.0,224.0 L796.0,225.5 L800.0,227.2 L804.0,229.0 L808.0,230.8 L812.0,232.5 L816.0,234.7 L820.0,237.0 L824.0,239.3 L828.0,241.5 L832.0,244.1 L836.0,246.7 L840.0,249.4 L844.0,252.0 L848.0,254.7 L852.0,257.5 L856.0,260.2 L860.0,262.9 L864.0,267.5 L868.0,272.4 L872.0,277.9 L876.0,283.9 L880.0,289.1 L884.0,293.9 L888.0,299.5 L892.0,305.2 L896.0,311.3 L900.0,318.5 L904.0,325.7 L908.0,333.8 L912.0,341.9 L916.0,350.4 M568.0,361.1 L572.0,345.5 L576.0,334.5 L580.0,325.3 L584.0,317.9 L588.0,310.6 L592.0,305.3 L596.0,299.9 L600.0,294.6 L604.0,289.9 L608.0,285.3 L612.0,280.5 L616.0,275.7 L620.0,270.9 L624.0,268.2 L628.0,265.5 L632.0,262.7 L636.0,260.0 L640.0,257.6 L644.0,255.2 L648.0,252.7 L652.0,250.4 L656.0,248.3 L660.0,246.2 L664.0,244.0 L668.0,241.9 L672.0,239.8 L676.0,237.6 L680.0,235.5 L684.0,234.0 L688.0,232.4 L692.0,230.9 L696.0,229.4 L700.0,227.9 L704.0,226.5 L708.0,225.0 L712.0,223.9 L716.0,223.0 L720.0,222.1 L724.0,221.3 L728.0,220.4 L732.0,219.5 L736.0,218.7 L740.0,218.0 L744.0,218.5 L748.0,219.1 L752.0,219.7 L756.0,220.2 L760.0,220.8 L764.0,221.4 L768.0,222.0 L772.0,223.4 L776.0,224.8 L780.0,226.2 L784.0,227.5 L788.0,228.8 L792.0,230.1 L796.0,231.5 L800.0,233.2 L804.0,234.8 L808.0,236.4 L812.0,238.1 L816.0,240.0 L820.0,242.1 L824.0,244.2 L828.0,246.3 L832.0,248.7 L836.0,251.1 L840.0,253.6 L844.0,256.0 L848.0,258.5 L852.0,261.0 L856.0,263.6 L860.0,266.1 L864.0,270.3 L868.0,274.8 L872.0,279.9 L876.0,285.4 L880.0,290.2 L884.0,294.7 L888.0,299.8 L892.0,305.1 L896.0,310.7 L900.0,317.4 L904.0,324.0 L908.0,331.4 L912.0,338.9 L916.0,346.8 M568.0,356.2 L572.0,341.9 L576.0,331.9 L580.0,323.5 L584.0,316.7 L588.0,310.0 L592.0,305.1 L596.0,300.2 L600.0,295.3 L604.0,291.1 L608.0,286.8 L612.0,282.4 L616.0,278.0 L620.0,273.7 L624.0,271.2 L628.0,268.7 L632.0,266.1 L636.0,263.7 L640.0,261.5 L644.0,259.2 L648.0,257.0 L652.0,254.9 L656.0,252.9 L660.0,251.0 L664.0,249.0 L668.0,247.1 L672.0,245.1 L676.0,243.2 L680.0,241.2 L684.0,239.8 L688.0,238.4 L692.0,237.0 L696.0,235.6 L700.0,234.3 L704.0,232.9 L708.0,231.6 L712.0,230.6 L716.0,229.8 L720.0,229.0 L724.0,228.2 L728.0,227.4 L732.0,226.6 L736.0,225.8 L740.0,225.2 L744.0,225.7 L748.0,226.2 L752.0,226.7 L756.0,227.2 L760.0,227.8 L764.0,228.3 L768.0,228.8 L772.0,230.1 L776.0,231.4 L780.0,232.7 L784.0,233.9 L788.0,235.1 L792.0,236.3 L796.0,237.6 L800.0,239.1 L804.0,240.6 L808.0,242.1 L812.0,243.6 L816.0,245.4 L820.0,247.3 L824.0,249.2 L828.0,251.1 L832.0,253.3 L836.0,255.5 L840.0,257.8 L844.0,260.0 L848.0,262.3 L852.0,264.6 L856.0,266.9 L860.0,269.2 L864.0,273.1 L868.0,277.2 L872.0,281.9 L876.0,286.9 L880.0,291.3 L884.0,295.4 L888.0,300.1 L892.0,305.0 L896.0,310.1 L900.0,316.2 L904.0,322.3 L908.0,329.1 L912.0,335.9 L916.0,343.1" stroke="#cf9c45" stroke-width="2.4" stroke-dasharray="3 1.6" fill="none" opacity="0.85"/></g>
<g clip-path="url(#capC_small)"><path d="M568.0,492.1 L572.0,457.4 L576.0,432.9 L580.0,412.6 L584.0,396.2 L588.0,379.9 L592.0,368.0 L596.0,356.1 L600.0,344.2 L604.0,333.9 L608.0,323.5 L612.0,313.0 L616.0,302.3 L620.0,291.7 L624.0,285.6 L628.0,279.5 L632.0,273.4 L636.0,267.4 L640.0,262.0 L644.0,256.6 L648.0,251.1 L652.0,246.1 L656.0,241.3 L660.0,236.6 L664.0,231.8 L668.0,227.1 L672.0,222.3 L676.0,217.5 L680.0,212.9 L684.0,209.5 L688.0,206.0 L692.0,202.6 L696.0,199.2 L700.0,196.0 L704.0,192.7 L708.0,189.5 L712.0,187.0 L716.0,185.1 L720.0,183.1 L724.0,181.2 L728.0,179.3 L732.0,177.3 L736.0,175.4 L740.0,173.9 L744.0,175.1 L748.0,176.4 L752.0,177.7 L756.0,178.9 L760.0,180.2 L764.0,181.4 L768.0,182.7 L772.0,185.8 L776.0,188.9 L780.0,192.1 L784.0,195.0 L788.0,198.0 L792.0,200.9 L796.0,204.0 L800.0,207.6 L804.0,211.3 L808.0,214.9 L812.0,218.5 L816.0,222.9 L820.0,227.6 L824.0,232.3 L828.0,237.0 L832.0,242.1 L836.0,247.6 L840.0,253.0 L844.0,258.5 L848.0,264.0 L852.0,269.6 L856.0,275.2 L860.0,280.8 L864.0,290.2 L868.0,300.3 L872.0,311.6 L876.0,323.9 L880.0,334.5 L884.0,344.4 L888.0,355.8 L892.0,367.6 L896.0,380.2 L900.0,394.9 L904.0,409.7 L908.0,426.2 L912.0,442.8 L916.0,460.4 M568.0,487.2 L572.0,453.8 L576.0,430.2 L580.0,410.6 L584.0,394.8 L588.0,379.1 L592.0,367.7 L596.0,356.2 L600.0,344.7 L604.0,334.8 L608.0,324.8 L612.0,314.6 L616.0,304.3 L620.0,294.2 L624.0,288.3 L628.0,282.4 L632.0,276.5 L636.0,270.8 L640.0,265.6 L644.0,260.3 L648.0,255.1 L652.0,250.2 L656.0,245.6 L660.0,241.1 L664.0,236.5 L668.0,231.9 L672.0,227.3 L676.0,222.7 L680.0,218.2 L684.0,214.9 L688.0,211.6 L692.0,208.4 L696.0,205.1 L700.0,202.0 L704.0,198.8 L708.0,195.7 L712.0,193.3 L716.0,191.4 L720.0,189.6 L724.0,187.7 L728.0,185.9 L732.0,184.0 L736.0,182.1 L740.0,180.7 L744.0,181.9 L748.0,183.1 L752.0,184.3 L756.0,185.5 L760.0,186.7 L764.0,188.0 L768.0,189.2 L772.0,192.2 L776.0,195.2 L780.0,198.2 L784.0,201.0 L788.0,203.9 L792.0,206.7 L796.0,209.7 L800.0,213.2 L804.0,216.7 L808.0,220.2 L812.0,223.7 L816.0,227.9 L820.0,232.4 L824.0,236.9 L828.0,241.4 L832.0,246.4 L836.0,251.7 L840.0,256.9 L844.0,262.1 L848.0,267.5 L852.0,272.9 L856.0,278.3 L860.0,283.7 L864.0,292.7 L868.0,302.4 L872.0,313.4 L876.0,325.2 L880.0,335.4 L884.0,345.0 L888.0,355.9 L892.0,367.3 L896.0,379.4 L900.0,393.6 L904.0,407.8 L908.0,423.8 L912.0,439.7 L916.0,456.6 M568.0,482.3 L572.0,450.2 L576.0,427.5 L580.0,408.6 L584.0,393.5 L588.0,378.3 L592.0,367.3 L596.0,356.3 L600.0,345.3 L604.0,335.7 L608.0,326.1 L612.0,316.3 L616.0,306.4 L620.0,296.6 L624.0,291.0 L628.0,285.3 L632.0,279.6 L636.0,274.1 L640.0,269.1 L644.0,264.1 L648.0,259.0 L652.0,254.3 L656.0,249.9 L660.0,245.5 L664.0,241.1 L668.0,236.7 L672.0,232.3 L676.0,227.9 L680.0,223.6 L684.0,220.4 L688.0,217.3 L692.0,214.1 L696.0,211.0 L700.0,207.9 L704.0,204.9 L708.0,201.9 L712.0,199.6 L716.0,197.8 L720.0,196.0 L724.0,194.2 L728.0,192.4 L732.0,190.7 L736.0,188.9 L740.0,187.4 L744.0,188.6 L748.0,189.8 L752.0,191.0 L756.0,192.1 L760.0,193.3 L764.0,194.5 L768.0,195.6 L772.0,198.5 L776.0,201.4 L780.0,204.3 L784.0,207.0 L788.0,209.8 L792.0,212.5 L796.0,215.4 L800.0,218.7 L804.0,222.1 L808.0,225.5 L812.0,228.8 L816.0,232.9 L820.0,237.2 L824.0,241.6 L828.0,245.9 L832.0,250.7 L836.0,255.7 L840.0,260.8 L844.0,265.8 L848.0,271.0 L852.0,276.2 L856.0,281.4 L860.0,286.6 L864.0,295.2 L868.0,304.6 L872.0,315.1 L876.0,326.4 L880.0,336.3 L884.0,345.5 L888.0,356.0 L892.0,367.0 L896.0,378.6 L900.0,392.3 L904.0,405.9 L908.0,421.3 L912.0,436.6 L916.0,452.9 M568.0,477.4 L572.0,446.5 L576.0,424.8 L580.0,406.6 L584.0,392.1 L588.0,377.6 L592.0,367.0 L596.0,356.4 L600.0,345.8 L604.0,336.6 L608.0,327.4 L612.0,318.0 L616.0,308.5 L620.0,299.1 L624.0,293.6 L628.0,288.2 L632.0,282.8 L636.0,277.5 L640.0,272.7 L644.0,267.8 L648.0,263.0 L652.0,258.5 L656.0,254.3 L660.0,250.0 L664.0,245.8 L668.0,241.6 L672.0,237.3 L676.0,233.1 L680.0,229.0 L684.0,225.9 L688.0,222.9 L692.0,219.8 L696.0,216.8 L700.0,213.9 L704.0,211.0 L708.0,208.1 L712.0,205.9 L716.0,204.2 L720.0,202.5 L724.0,200.8 L728.0,199.0 L732.0,197.3 L736.0,195.6 L740.0,194.2 L744.0,195.4 L748.0,196.5 L752.0,197.6 L756.0,198.7 L760.0,199.9 L764.0,201.0 L768.0,202.1 L772.0,204.9 L776.0,207.7 L780.0,210.4 L784.0,213.1 L788.0,215.7 L792.0,218.3 L796.0,221.1 L800.0,224.3 L804.0,227.5 L808.0,230.8 L812.0,234.0 L816.0,237.9 L820.0,242.1 L824.0,246.2 L828.0,250.4 L832.0,255.0 L836.0,259.8 L840.0,264.7 L844.0,269.5 L848.0,274.5 L852.0,279.5 L856.0,284.4 L860.0,289.4 L864.0,297.7 L868.0,306.7 L872.0,316.8 L876.0,327.7 L880.0,337.2 L884.0,346.0 L888.0,356.1 L892.0,366.6 L896.0,377.8 L900.0,390.9 L904.0,404.0 L908.0,418.8 L912.0,433.5 L916.0,449.2 M568.0,472.5 L572.0,442.9 L576.0,422.0 L580.0,404.6 L584.0,390.7 L588.0,376.8 L592.0,366.6 L596.0,356.5 L600.0,346.3 L604.0,337.5 L608.0,328.7 L612.0,319.7 L616.0,310.6 L620.0,301.5 L624.0,296.3 L628.0,291.1 L632.0,285.9 L636.0,280.9 L640.0,276.2 L644.0,271.6 L648.0,266.9 L652.0,262.6 L656.0,258.6 L660.0,254.5 L664.0,250.5 L668.0,246.4 L672.0,242.4 L676.0,238.3 L680.0,234.3 L684.0,231.4 L688.0,228.5 L692.0,225.6 L696.0,222.7 L700.0,219.9 L704.0,217.1 L708.0,214.3 L712.0,212.2 L716.0,210.6 L720.0,208.9 L724.0,207.3 L728.0,205.6 L732.0,204.0 L736.0,202.3 L740.0,201.0 L744.0,202.1 L748.0,203.2 L752.0,204.3 L756.0,205.3 L760.0,206.4 L764.0,207.5 L768.0,208.6 L772.0,211.2 L776.0,213.9 L780.0,216.6 L784.0,219.1 L788.0,221.6 L792.0,224.1 L796.0,226.8 L800.0,229.9 L804.0,232.9 L808.0,236.0 L812.0,239.1 L816.0,242.9 L820.0,246.9 L824.0,250.9 L828.0,254.8 L832.0,259.3 L836.0,263.9 L840.0,268.6 L844.0,273.2 L848.0,278.0 L852.0,282.7 L856.0,287.5 L860.0,292.3 L864.0,300.2 L868.0,308.9 L872.0,318.6 L876.0,329.0 L880.0,338.1 L884.0,346.5 L888.0,356.2 L892.0,366.3 L896.0,377.0 L900.0,389.6 L904.0,402.2 L908.0,416.3 L912.0,430.4 L916.0,445.4 M568.0,467.6 L572.0,439.3 L576.0,419.3 L580.0,402.6 L584.0,389.3 L588.0,376.0 L592.0,366.3 L596.0,356.6 L600.0,346.9 L604.0,338.4 L608.0,330.0 L612.0,321.4 L616.0,312.6 L620.0,304.0 L624.0,299.0 L628.0,294.0 L632.0,289.0 L636.0,284.2 L640.0,279.8 L644.0,275.3 L648.0,270.9 L652.0,266.8 L656.0,262.9 L660.0,259.0 L664.0,255.1 L668.0,251.3 L672.0,247.4 L676.0,243.5 L680.0,239.7 L684.0,236.9 L688.0,234.1 L692.0,231.3 L696.0,228.6 L700.0,225.9 L704.0,223.2 L708.0,220.6 L712.0,218.5 L716.0,217.0 L720.0,215.4 L724.0,213.8 L728.0,212.2 L732.0,210.7 L736.0,209.1 L740.0,207.8 L744.0,208.9 L748.0,209.9 L752.0,210.9 L756.0,212.0 L760.0,213.0 L764.0,214.0 L768.0,215.1 L772.0,217.6 L776.0,220.1 L780.0,222.7 L784.0,225.1 L788.0,227.5 L792.0,229.9 L796.0,232.4 L800.0,235.4 L804.0,238.4 L808.0,241.3 L812.0,244.3 L816.0,247.9 L820.0,251.7 L824.0,255.5 L828.0,259.3 L832.0,263.6 L836.0,268.0 L840.0,272.4 L844.0,276.9 L848.0,281.4 L852.0,286.0 L856.0,290.6 L860.0,295.1 L864.0,302.8 L868.0,311.0 L872.0,320.3 L876.0,330.3 L880.0,338.9 L884.0,347.1 L888.0,356.3 L892.0,366.0 L896.0,376.2 L900.0,388.3 L904.0,400.3 L908.0,413.8 L912.0,427.3 L916.0,441.7 M568.0,462.7 L572.0,435.6 L576.0,416.6 L580.0,400.7 L584.0,387.9 L588.0,375.2 L592.0,365.9 L596.0,356.7 L600.0,347.4 L604.0,339.3 L608.0,331.3 L612.0,323.0 L616.0,314.7 L620.0,306.5 L624.0,301.7 L628.0,296.9 L632.0,292.2 L636.0,287.6 L640.0,283.3 L644.0,279.1 L648.0,274.8 L652.0,270.9 L656.0,267.2 L660.0,263.5 L664.0,259.8 L668.0,256.1 L672.0,252.4 L676.0,248.7 L680.0,245.0 L684.0,242.4 L688.0,239.7 L692.0,237.0 L696.0,234.4 L700.0,231.9 L704.0,229.3 L708.0,226.8 L712.0,224.9 L716.0,223.4 L720.0,221.8 L724.0,220.3 L728.0,218.8 L732.0,217.3 L736.0,215.8 L740.0,214.6 L744.0,215.6 L748.0,216.6 L752.0,217.6 L756.0,218.6 L760.0,219.6 L764.0,220.5 L768.0,221.5 L772.0,224.0 L776.0,226.4 L780.0,228.8 L784.0,231.1 L788.0,233.4 L792.0,235.7 L796.0,238.1 L800.0,241.0 L804.0,243.8 L808.0,246.6 L812.0,249.4 L816.0,252.9 L820.0,256.5 L824.0,260.2 L828.0,263.8 L832.0,267.8 L836.0,272.1 L840.0,276.3 L844.0,280.6 L848.0,284.9 L852.0,289.3 L856.0,293.6 L860.0,298.0 L864.0,305.3 L868.0,313.2 L872.0,322.0 L876.0,331.6 L880.0,339.8 L884.0,347.6 L888.0,356.4 L892.0,365.7 L896.0,375.4 L900.0,386.9 L904.0,398.4 L908.0,411.3 L912.0,424.2 L916.0,437.9 M568.0,457.8 L572.0,432.0 L576.0,413.8 L580.0,398.7 L584.0,386.6 L588.0,374.4 L592.0,365.6 L596.0,356.8 L600.0,347.9 L604.0,340.2 L608.0,332.6 L612.0,324.7 L616.0,316.8 L620.0,308.9 L624.0,304.4 L628.0,299.8 L632.0,295.3 L636.0,290.9 L640.0,286.9 L644.0,282.8 L648.0,278.8 L652.0,275.0 L656.0,271.5 L660.0,268.0 L664.0,264.5 L668.0,260.9 L672.0,257.4 L676.0,253.9 L680.0,250.4 L684.0,247.9 L688.0,245.3 L692.0,242.8 L696.0,240.3 L700.0,237.8 L704.0,235.4 L708.0,233.0 L712.0,231.2 L716.0,229.7 L720.0,228.3 L724.0,226.9 L728.0,225.4 L732.0,224.0 L736.0,222.6 L740.0,221.4 L744.0,222.4 L748.0,223.3 L752.0,224.2 L756.0,225.2 L760.0,226.1 L764.0,227.1 L768.0,228.0 L772.0,230.3 L776.0,232.6 L780.0,234.9 L784.0,237.1 L788.0,239.3 L792.0,241.5 L796.0,243.8 L800.0,246.5 L804.0,249.2 L808.0,251.9 L812.0,254.6 L816.0,257.9 L820.0,261.3 L824.0,264.8 L828.0,268.3 L832.0,272.1 L836.0,276.2 L840.0,280.2 L844.0,284.2 L848.0,288.4 L852.0,292.6 L856.0,296.7 L860.0,300.9 L864.0,307.8 L868.0,315.3 L872.0,323.7 L876.0,332.8 L880.0,340.7 L884.0,348.1 L888.0,356.5 L892.0,365.3 L896.0,374.7 L900.0,385.6 L904.0,396.5 L908.0,408.8 L912.0,421.2 L916.0,434.2 M568.0,452.9 L572.0,428.4 L576.0,411.1 L580.0,396.7 L584.0,385.2 L588.0,373.7 L592.0,365.3 L596.0,356.9 L600.0,348.5 L604.0,341.2 L608.0,333.9 L612.0,326.4 L616.0,318.9 L620.0,311.4 L624.0,307.1 L628.0,302.8 L632.0,298.4 L636.0,294.3 L640.0,290.4 L644.0,286.6 L648.0,282.7 L652.0,279.2 L656.0,275.8 L660.0,272.5 L664.0,269.1 L668.0,265.8 L672.0,262.4 L676.0,259.0 L680.0,255.8 L684.0,253.3 L688.0,250.9 L692.0,248.5 L696.0,246.1 L700.0,243.8 L704.0,241.5 L708.0,239.2 L712.0,237.5 L716.0,236.1 L720.0,234.8 L724.0,233.4 L728.0,232.0 L732.0,230.7 L736.0,229.3 L740.0,228.2 L744.0,229.1 L748.0,230.0 L752.0,230.9 L756.0,231.8 L760.0,232.7 L764.0,233.6 L768.0,234.5 L772.0,236.7 L776.0,238.9 L780.0,241.1 L784.0,243.1 L788.0,245.2 L792.0,247.3 L796.0,249.5 L800.0,252.1 L804.0,254.6 L808.0,257.2 L812.0,259.7 L816.0,262.9 L820.0,266.2 L824.0,269.4 L828.0,272.7 L832.0,276.4 L836.0,280.3 L840.0,284.1 L844.0,287.9 L848.0,291.9 L852.0,295.8 L856.0,299.8 L860.0,303.7 L864.0,310.3 L868.0,317.5 L872.0,325.5 L876.0,334.1 L880.0,341.6 L884.0,348.6 L888.0,356.6 L892.0,365.0 L896.0,373.9 L900.0,384.3 L904.0,394.7 L908.0,406.4 L912.0,418.1 L916.0,430.5" stroke="#221f25" stroke-width="2.6" stroke-dasharray="2.6 1.4" fill="none"/></g>
<path d="M739.5,166.7 C733.9,168.7 719.5,171.4 706.7,178.7 C693.9,186.0 676.0,199.9 662.5,210.6 C649.0,221.3 635.9,233.5 626.0,242.7 C616.1,251.9 609.2,258.4 603.0,266.0 C596.8,273.6 593.2,280.3 589.0,288.0 C584.8,295.7 581.1,303.5 578.0,312.0 C574.9,320.5 572.3,331.0 570.5,339.0 C568.7,347.0 567.8,349.0 567.0,360.0 C566.2,371.0 565.6,391.7 565.5,405.0 C565.4,418.3 566.3,429.7 566.5,440.0 C566.7,450.3 565.8,460.7 566.5,467.0 C567.2,473.3 568.1,474.7 570.7,478.0 C573.3,481.3 578.0,484.3 582.0,487.0 C586.0,489.7 590.9,490.7 595.0,494.0 C599.1,497.3 603.7,503.2 606.5,507.0 C609.3,510.8 609.4,512.5 612.0,517.0 C614.6,521.5 618.8,528.5 622.0,534.0 C625.2,539.5 628.3,545.2 631.0,550.0 C633.7,554.8 636.1,559.5 638.0,563.0 C639.9,566.5 641.9,568.7 642.4,571.0 C642.9,573.3 641.3,573.7 640.8,577.0 C640.3,580.3 639.0,586.2 639.6,591.0 C640.2,595.8 641.6,601.9 644.4,605.5 C647.2,609.1 638.9,610.9 656.5,612.7 C674.1,614.5 718.8,616.3 750.0,616.3 C781.2,616.3 826.1,614.9 844.0,612.7 C861.9,610.5 854.5,606.6 857.3,603.0 C860.1,599.4 860.8,595.3 861.0,591.0 C861.2,586.7 859.6,580.2 858.5,577.0 C857.4,573.8 853.8,575.4 854.6,572.0 C855.5,568.6 860.2,562.5 863.6,556.5 C867.0,550.5 871.2,542.9 874.8,536.3 C878.4,529.7 882.4,521.5 885.0,517.0 C887.6,512.5 888.5,512.6 890.5,509.4 C892.5,506.2 894.8,501.6 897.0,498.0 C899.2,494.4 901.3,490.6 904.0,488.0 C906.7,485.4 909.7,485.4 913.0,482.6 C916.3,479.8 921.4,475.2 924.0,471.4 C926.6,467.6 928.6,465.2 928.6,460.0 C928.6,454.8 924.9,449.2 924.0,440.0 C923.1,430.8 923.7,418.3 923.0,405.0 C922.3,391.7 920.8,370.8 920.0,360.0 C919.2,349.2 919.3,346.3 918.0,340.5 C916.7,334.7 914.3,330.8 912.0,325.0 C909.7,319.2 907.0,311.8 904.0,305.5 C901.0,299.2 898.3,293.1 894.0,287.0 C889.7,280.9 884.9,276.0 878.0,268.6 C871.1,261.2 862.3,252.4 852.8,242.7 C843.3,233.0 834.0,221.3 821.0,210.6 C808.0,199.9 788.1,186.0 774.7,178.7 C761.3,171.4 746.4,168.7 740.5,166.7 C734.6,164.7 745.1,164.7 739.5,166.7Z" fill="none" stroke="#96402d" stroke-width="10"/>
<path d="M590.0,266.0 L617.0,244.0 L714.0,227.0 L714.0,262.0 L640.0,266.0Z" fill="url(#or_small)"/>
<path d="M770.0,227.0 L864.0,244.0 L890.0,270.0 L850.0,263.0 L770.0,260.0Z" fill="url(#orr_small)"/>
<path d="M712.0,227.0 L772.0,227.0 L772.0,262.0 L712.0,262.0Z" fill="url(#br_small)"/>
<path d="M600,250 Q740,218 880,250" stroke="#96402d" stroke-width="4" fill="none"/>
<path d="M640.0,266.0 L690.0,261.0 L714.0,259.0 L714.0,343.0 L592.0,343.0Z" fill="url(#og_small)"/>
<path d="M770.0,259.0 L800.0,259.0 L856.0,263.0 L882.0,343.0 L770.0,343.0Z" fill="url(#ogr_small)"/>
<path d="M700.0,258.0 L741.0,258.0 L741.0,340.0 L700.0,340.0Z" fill="url(#bg_small)"/>
<path d="M741.0,258.0 L790.0,258.0 L790.0,340.0 L741.0,340.0Z" fill="url(#bgr_small)"/>
<path d="M560.0,300.0 L602.0,268.0 L642.0,266.0 L594.0,343.0 L560.0,343.0Z" fill="url(#rg_small)"/>
<path d="M855.0,263.0 L888.0,272.0 L935.0,300.0 L935.0,343.0 L880.0,343.0Z" fill="url(#rgr_small)"/>
<path d="M560,339 Q740,335 935,339" stroke="#221f25" stroke-width="3.5" fill="none"/>
<path d="M560,342 Q740,338.5 935,342" stroke="#8a8080" stroke-width="1" fill="none" opacity="0.5"/>
<path d="M594.0,342.0 L694.0,342.0 L694.0,472.0 L594.0,470.0Z" fill="url(#od_small)"/>
<path d="M789.0,342.0 L890.0,341.0 L890.0,470.0 L789.0,472.0Z" fill="url(#odr_small)"/>
<path d="M694.0,341.0 L789.0,341.0 L789.0,472.0 L694.0,472.0Z" fill="url(#bsq_small)"/>
<path d="M560.0,341.0 L594.0,342.0 L594.0,470.0 L560.0,466.0Z" fill="url(#rb_small)"/>
<path d="M889.0,341.0 L935.0,341.0 L935.0,470.0 L889.0,470.0Z" fill="url(#rbr_small)"/>
<path d="M592,344 L592,470 M891,344 L891,470" stroke="#221f25" stroke-width="4.5" opacity="0.9"/>
<path d="M560,347 Q740,344 935,347" stroke="#55a048" stroke-width="1.1" fill="none" opacity="0.5"/>
<path d="M560.0,455.0 L600.0,468.0 L694.0,472.0 L694.0,495.5 L560.0,485.5Z" fill="url(#opu_small)"/>
<path d="M789.0,472.0 L890.0,468.0 L935.0,456.0 L935.0,485.5 L789.0,495.5Z" fill="url(#opu_small)"/>
<path d="M560.0,483.5 L694.0,493.5 L700.0,514.0 L650.0,509.0 L560.0,503.0Z" fill="url(#op_small)"/>
<path d="M789.0,493.5 L935.0,483.5 L935.0,503.0 L850.0,509.0 L789.0,513.0Z" fill="url(#opr_small)"/>
<path d="M694.0,472.0 L789.0,472.0 L789.0,513.0 L694.0,514.0Z" fill="url(#bp_small)"/>
<path d="M575,482 Q748,485 922,481" stroke="#55a048" stroke-width="1.6" fill="none" opacity="0.9"/>
<path d="M560.0,503.0 L650.0,509.0 L700.0,514.0 L700.0,578.0 L560.0,578.0Z" fill="url(#opk_small)"/>
<path d="M790.0,512.0 L850.0,509.0 L935.0,501.0 L935.0,578.0 L790.0,578.0Z" fill="url(#opkr_small)"/>
<path d="M698.0,514.0 L749.0,515.0 L749.0,578.0 L698.0,578.0Z" fill="url(#bpk_small)"/>
<path d="M749.0,515.0 L790.0,512.0 L790.0,578.0 L749.0,578.0Z" fill="url(#bpkr_small)"/>
<path d="M617.7,511 L641,571" stroke="#a0506a" stroke-width="8" opacity="0.75" stroke-dasharray="3 2.5"/>
<path d="M880.3,511 L857,571" stroke="#a0506a" stroke-width="8" opacity="0.75" stroke-dasharray="3 2.5"/>
<path d="M641.0,572.0 C651.0,570.2 682.2,571.3 700.0,571.0 C717.8,570.7 731.3,570.0 748.0,570.0 C764.7,570.0 781.7,570.7 800.0,571.0 C818.3,571.3 847.8,570.2 858.0,572.0 C868.2,573.8 860.5,578.8 861.0,582.0 C861.5,585.2 861.6,587.5 861.0,591.0 C860.4,594.5 860.1,599.4 857.3,603.0 C854.5,606.6 861.9,610.5 844.0,612.7 C826.1,614.9 781.2,616.3 750.0,616.3 C718.8,616.3 674.1,614.5 656.5,612.7 C638.9,610.9 647.2,609.1 644.4,605.5 C641.6,601.9 640.3,594.9 639.6,591.0 C638.9,587.1 639.8,585.2 640.0,582.0 C640.2,578.8 631.0,573.8 641.0,572.0Z" fill="url(#rbase_small)"/>
<path d="M650,608 Q750,620 850,608" stroke="#cf9c45" stroke-width="3" fill="none" opacity="0.8" stroke-dasharray="3 2.5"/>
<path d="M644,604 Q660,611 680,612 M820,612 Q842,610 856,603" stroke="#221f25" stroke-width="3" fill="none" opacity="0.7" stroke-dasharray="3 3"/>
<path d="M640,571 L712,570 L712,585.5 L640,585.5Z" fill="url(#zz_small)" opacity="0.95"/>
<path d="M786,570 L860,571 L860,585.5 L786,585.5Z" fill="url(#zz_small)" opacity="0.95"/>
<path d="M710,570 L788,570 L788,586 L710,586Z" fill="url(#zzb_small)" opacity="0.9"/></g><path d="M592,489 C597,520 612,550 644,572" stroke="#6e2f22" stroke-width="4.8" fill="none" stroke-linecap="round"/>
<path d="M592,489 C597,520 612,550 644,572" stroke="#9a4a35" stroke-width="3" fill="none" stroke-linecap="round"/>
<path d="M902,487 C902,522 884,552 854,572" stroke="#6e2f22" stroke-width="4.8" fill="none" stroke-linecap="round"/>
<path d="M902,487 C902,522 884,552 854,572" stroke="#9a4a35" stroke-width="3" fill="none" stroke-linecap="round"/>
<path d="M748.5,493 L748.5,583" stroke="#6e2f22" stroke-width="5" fill="none"/>
<path d="M748.5,493 L748.5,583" stroke="#9a4a35" stroke-width="3" fill="none"/>
<path d="M740,143.5 L740,168" stroke="#3f3634" stroke-width="3" fill="none" stroke-linecap="round"/>
<path d="M740.5,169 L742,227" stroke="#6e2f22" stroke-width="6" fill="none"/>
<path d="M740.5,169 L742,227" stroke="#96402d" stroke-width="4" fill="none"/></g></svg>
<div class="a" style="left:907px;top:600px;width:91px;height:69px;background:#fdfdfd;border-left:1px solid #c8c8c8"></div>
<div class="a" style="left:929px;top:660.5px;width:12px;height:12px;border-radius:50%;background:#5aa646"></div>
<div class="a" style="left:950.5px;top:658px;font-size:13.5px;line-height:16px;color:#1c2433">Vert</div>
<!-- preview window -->
<div class="a" id="win" style="left:469px;top:62px;width:560px;height:599px;border-radius:5px 5px 5px 5px;background:#fff;box-shadow:0 0 0 1px rgba(0,0,0,0.16), 0 20px 44px rgba(0,0,0,0.55);overflow:hidden">
  <div class="a" style="left:0;top:0;width:560px;height:55px;background:linear-gradient(#e9e9e9,#d4d4d4);border-bottom:1px solid #a9a9a9;box-sizing:border-box"></div>
  <div class="a" style="left:0;top:0;width:560px;height:1px;background:#f7f7f7"></div>
  <div class="a" style="left:8px;top:5px;width:12px;height:12px;box-sizing:border-box;border-radius:50%;background:#fc605c;border:0.6px solid #d9423e"></div>
  <div class="a" style="left:28px;top:5px;width:12px;height:12px;box-sizing:border-box;border-radius:50%;background:#fdbc40;border:0.6px solid #d99a2b"></div>
  <div class="a" style="left:48px;top:5px;width:12px;height:12px;box-sizing:border-box;border-radius:50%;background:#34c84a;border:0.6px solid #1f9d30"></div>
  <svg class="a" style="left:177px;top:3px" width="13" height="17">
 <path d="M0.6,0.6 L8.2,0.6 L11.6,4 L11.6,15.8 L0.6,15.8Z" fill="#fdfdfd" stroke="#9a9a9a" stroke-width="0.8"/>
 <path d="M8.2,0.6 L8.2,4 L11.6,4" fill="#e6e6e6" stroke="#b0b0b0" stroke-width="0.6"/>
 <rect x="2" y="6" width="8" height="3.2" fill="#7aa6d8"/>
 <rect x="2.2" y="8.6" width="3.5" height="3" fill="#3f6ca8"/>
 <circle cx="7.6" cy="11.6" r="2.3" fill="#5c5c5c"/>
 <rect x="2" y="5.2" width="3" height="0.8" fill="#d2a86a"/>
</svg>
  <div class="a" style="left:194.5px;top:3px;font-size:13.85px;line-height:16px;color:#4a4a4a;white-space:nowrap">ISEGSG multicolor BACK.jpg</div>
  <div class="btn" style="left:8px;width:38px"></div><div class="btn" style="left:54px;width:39px"></div><div class="btn" style="left:94px;width:39px"></div><div class="btn" style="left:141px;width:38px"></div><div class="btn" style="left:207px;width:51px"></div><div class="btn" style="left:266px;width:36px"></div><div class="btn" style="left:310px;width:38px"></div>
  <div class="btn" style="left:356px;width:200px"></div>
  <div class="a" style="left:417px;top:27.5px;font-size:12.8px;line-height:16px;color:#b6b6b6;white-space:nowrap">Rechercher</div>
  
<svg class="a" style="left:0;top:0" width="560" height="60" fill="none" stroke="#666" stroke-width="1.1">
 <g transform="translate(-469,-62)">
  <!-- sidebar -->
  <rect x="483.6" y="91.6" width="13.8" height="10.8" rx="1" stroke-width="1.2"/>
  <line x1="488.5" y1="91.6" x2="488.5" y2="102.4" stroke-width="1.2"/>
  <line x1="485" y1="93.6" x2="487" y2="93.6" stroke-width="0.9"/>
  <line x1="485" y1="95.6" x2="487" y2="95.6" stroke-width="0.9"/>
  <line x1="485" y1="97.6" x2="487" y2="97.6" stroke-width="0.9"/>
  <path d="M502.2,96.3 L505.4,99.4 L508.6,96.3" stroke-width="1.5"/>
  <!-- zoom out -->
  <circle cx="541.7" cy="95.5" r="5.2" stroke-width="1.2"/>
  <line x1="539.2" y1="95.5" x2="544.3" y2="95.5" stroke-width="1.2"/>
  <line x1="545.6" y1="99.5" x2="549.8" y2="103.7" stroke-width="1.3"/>
  <!-- zoom in -->
  <circle cx="580.6" cy="95.5" r="5.2" stroke-width="1.2"/>
  <line x1="578.1" y1="95.5" x2="583.2" y2="95.5" stroke-width="1.2"/>
  <line x1="580.6" y1="93" x2="580.6" y2="98.1" stroke-width="1.2"/>
  <line x1="584.5" y1="99.5" x2="588.7" y2="103.7" stroke-width="1.3"/>
  <!-- share -->
  <path d="M627.8,94.6 L624.6,94.6 L624.6,103.3 L634.6,103.3 L634.6,94.6 L631.4,94.6" stroke-width="1.2"/>
  <line x1="629.6" y1="89.8" x2="629.6" y2="98.8" stroke-width="1.1"/>
  <path d="M626.8,92.6 L629.6,89.6 L632.4,92.6" stroke-width="1.1"/>
  <!-- highlight (light) -->
  <path d="M691.8,91.2 L699.8,91.2 L690.2,99.9 L686.6,97.2Z" fill="#c6c6c6" stroke="none"/>
  <path d="M687.6,97.4 L690.2,100.2 L684.8,102.3Z" fill="#c6c6c6" stroke="none"/>
  <line x1="685.5" y1="96.4" x2="690.9" y2="100.8" stroke="#fbfbfb" stroke-width="0.9"/>
  <line x1="685" y1="102.4" x2="699.6" y2="102.6" stroke="#cfcfcf" stroke-width="0.8"/>
  <line x1="708.4" y1="86" x2="708.4" y2="108" stroke="#e2e2e2" stroke-width="0.9"/>
  <path d="M714.1,96.1 L717.5,99.5 L720.9,96.1" stroke="#bdbdbd" stroke-width="1.35"/>
  <!-- rotate -->
  <rect x="746.3" y="96.5" width="9.4" height="7" stroke-width="1.2"/>
  <path d="M751.5,91.3 C755.5,91.6 759.3,95 759.5,99.8" stroke-width="1.2"/>
  <path d="M748.8,91.2 L752.6,88.6 L752.6,93.8Z" fill="#666" stroke="none"/>
  <!-- toolbox -->
  <path d="M790.5,103.5 L790.5,97.5 Q790.5,95.5 792.5,95.5 L804.5,95.5 Q806.5,95.5 806.5,97.5 L806.5,103.5Z" stroke-width="1.2"/>
  <path d="M795.4,95.5 L795.4,92.2 Q795.4,91.4 796.2,91.4 L800.8,91.4 Q801.6,91.4 801.6,92.2 L801.6,95.5" stroke-width="1.2"/>
  <line x1="790.5" y1="99.3" x2="797.4" y2="99.3" stroke-width="1.1"/>
  <line x1="799.6" y1="99.3" x2="806.5" y2="99.3" stroke-width="1.1"/>
  <rect x="797.5" y="97.5" width="2.1" height="3.2" stroke-width="1"/>
  <!-- search -->
  <circle cx="872.4" cy="96.4" r="4.3" stroke="#b5b5b5" stroke-width="1.1"/>
  <line x1="875.5" y1="99.6" x2="879.4" y2="103.3" stroke="#b5b5b5" stroke-width="1.2"/>
 </g>
</svg>
  <div class="a" style="left:0;top:55px;width:4px;height:544px;background:#e0e0e0"></div>
  <div class="a" style="left:-469px;top:-62px;width:998px;height:669px"><svg class="a" style="left:0;top:0" width="998" height="669"><defs><clipPath id="clip_big"><path d="M739.5,166.7 C734.4,168.1 717.1,172.6 709.6,175.2 C702.1,177.8 699.6,179.9 694.6,182.4 C689.6,184.9 684.7,186.9 679.7,189.9 C674.7,192.9 669.7,196.9 664.7,200.4 C659.7,203.9 654.8,207.1 649.8,210.8 C644.8,214.5 639.8,218.6 634.8,222.8 C629.8,227.0 624.1,231.2 619.9,236.2 C615.7,241.2 612.7,247.6 609.4,252.7 C606.1,257.8 603.6,261.1 600.0,267.0 C596.4,272.9 591.7,280.5 588.0,288.0 C584.3,295.5 580.9,303.5 578.0,312.0 C575.1,320.5 572.3,331.0 570.5,339.0 C568.7,347.0 567.8,349.0 567.0,360.0 C566.2,371.0 565.6,391.7 565.5,405.0 C565.4,418.3 566.3,429.7 566.5,440.0 C566.7,450.3 565.8,460.7 566.5,467.0 C567.2,473.3 568.1,474.7 570.7,478.0 C573.3,481.3 578.0,484.3 582.0,487.0 C586.0,489.7 590.9,490.7 595.0,494.0 C599.1,497.3 603.7,503.2 606.5,507.0 C609.3,510.8 609.4,512.5 612.0,517.0 C614.6,521.5 618.8,528.5 622.0,534.0 C625.2,539.5 628.3,545.2 631.0,550.0 C633.7,554.8 636.1,559.5 638.0,563.0 C639.9,566.5 641.9,568.7 642.4,571.0 C642.9,573.3 641.3,573.7 640.8,577.0 C640.3,580.3 639.0,586.2 639.6,591.0 C640.2,595.8 641.6,601.9 644.4,605.5 C647.2,609.1 638.9,610.9 656.5,612.7 C674.1,614.5 718.8,616.3 750.0,616.3 C781.2,616.3 826.1,614.9 844.0,612.7 C861.9,610.5 854.5,606.6 857.3,603.0 C860.1,599.4 860.8,595.3 861.0,591.0 C861.2,586.7 859.6,580.2 858.5,577.0 C857.4,573.8 853.8,575.4 854.6,572.0 C855.5,568.6 860.2,562.5 863.6,556.5 C867.0,550.5 871.2,542.9 874.8,536.3 C878.4,529.7 882.4,521.5 885.0,517.0 C887.6,512.5 888.5,512.6 890.5,509.4 C892.5,506.2 894.8,501.6 897.0,498.0 C899.2,494.4 901.3,490.6 904.0,488.0 C906.7,485.4 909.7,485.4 913.0,482.6 C916.3,479.8 921.4,475.2 924.0,471.4 C926.6,467.6 928.6,465.2 928.6,460.0 C928.6,454.8 924.9,449.2 924.0,440.0 C923.1,430.8 923.7,418.3 923.0,405.0 C922.3,391.7 920.8,370.8 920.0,360.0 C919.2,349.2 919.3,346.3 918.0,340.5 C916.7,334.7 914.3,330.8 912.0,325.0 C909.7,319.2 906.8,312.0 904.0,305.5 C901.2,299.0 898.2,292.1 895.0,286.0 C891.8,279.9 888.0,273.4 885.0,268.6 C882.0,263.8 879.8,261.4 877.2,257.2 C874.7,253.0 872.5,248.2 869.7,243.7 C867.0,239.2 864.9,234.8 860.7,230.3 C856.5,225.8 849.5,221.1 844.3,216.8 C839.1,212.6 834.5,208.7 829.3,204.8 C824.1,200.9 818.7,197.1 813.0,193.6 C807.3,190.1 800.5,186.7 795.0,184.0 C789.5,181.3 784.5,179.5 780.0,177.5 C775.5,175.5 774.6,173.8 768.0,172.0 C761.4,170.2 745.2,167.6 740.5,166.7 C735.8,165.8 744.6,165.3 739.5,166.7Z"/></clipPath>
<pattern id="od_big" width="6.8" height="20" patternUnits="userSpaceOnUse" patternTransform="skewY(-27) skewX(-5)">
 <rect width="6.8" height="20" fill="#352a27"/><rect x="0" y="16.5" width="6.8" height="1" fill="#5a4236"/><rect x="1.2" y="4" width="3.9" height="11.5" fill="#f7a11b"/></pattern>
<pattern id="odr_big" width="6.4" height="20" patternUnits="userSpaceOnUse" patternTransform="skewY(-31) skewX(-4)">
 <rect width="6.4" height="20" fill="#352a27"/><rect x="0" y="16.5" width="6.4" height="1" fill="#5a4236"/><rect x="1.1" y="4" width="3.8" height="11.5" fill="#f7a11b"/></pattern>
<pattern id="bsq_big" width="3" height="4" patternUnits="userSpaceOnUse">
 <rect width="3" height="4" fill="#2b2627"/><rect x="0" y="0" width="1" height="4" fill="#463a3a"/><rect x="1" y="2" width="1.5" height="1" fill="#463a3a"/></pattern>
<pattern id="og_big" width="6.5" height="15" patternUnits="userSpaceOnUse" patternTransform="skewY(-40) skewX(-14)">
 <rect width="6.5" height="15" fill="#23b44b"/><rect x="1" y="2" width="2.4" height="7.5" fill="#fb8e12"/></pattern>
<pattern id="ogr_big" width="6.5" height="15" patternUnits="userSpaceOnUse" patternTransform="skewY(38) skewX(14)">
 <rect width="6.5" height="15" fill="#23b44b"/><rect x="1" y="2" width="2.4" height="7.5" fill="#fb8e12"/></pattern>
<pattern id="bg_big" width="5.5" height="14" patternUnits="userSpaceOnUse" patternTransform="skewY(-50)">
 <rect width="5.5" height="14" fill="#23b44b"/><rect x="1.5" y="2" width="2.2" height="7.5" fill="#2b2627"/></pattern>
<pattern id="bgr_big" width="5.5" height="14" patternUnits="userSpaceOnUse" patternTransform="skewY(50)">
 <rect width="5.5" height="14" fill="#23b44b"/><rect x="1.5" y="2" width="2.2" height="7.5" fill="#2b2627"/></pattern>
<pattern id="or_big" width="6" height="11" patternUnits="userSpaceOnUse" patternTransform="skewY(26) skewX(-28)">
 <rect width="6" height="11" fill="#da1f3d"/><rect x="1" y="2" width="3" height="6.5" fill="#fb8e12"/></pattern>
<pattern id="orr_big" width="6" height="11" patternUnits="userSpaceOnUse" patternTransform="skewY(-26) skewX(28)">
 <rect width="6" height="11" fill="#da1f3d"/><rect x="1" y="2" width="3" height="6.5" fill="#fb8e12"/></pattern>
<pattern id="br_big" width="6" height="10" patternUnits="userSpaceOnUse" patternTransform="skewY(-22) skewX(8)">
 <rect width="6" height="10" fill="#da1f3d"/><rect x="1.5" y="2" width="2.8" height="6" fill="#2b2627"/></pattern>
<pattern id="rg_big" width="7" height="7" patternUnits="userSpaceOnUse" patternTransform="rotate(-60)">
 <rect width="7" height="7" fill="#da1f3d"/><rect x="0" y="0" width="7" height="3.2" fill="#23b44b"/></pattern>
<pattern id="rgr_big" width="7" height="7" patternUnits="userSpaceOnUse" patternTransform="rotate(58)">
 <rect width="7" height="7" fill="#da1f3d"/><rect x="0" y="0" width="7" height="3.2" fill="#23b44b"/></pattern>
<pattern id="rb_big" width="6.5" height="6.5" patternUnits="userSpaceOnUse" patternTransform="rotate(-58)">
 <rect width="6.5" height="6.5" fill="#da1f3d"/><rect x="0" y="0" width="6.5" height="2.4" fill="#2b2627"/></pattern>
<pattern id="rbr_big" width="6.5" height="6.5" patternUnits="userSpaceOnUse" patternTransform="rotate(62)">
 <rect width="6.5" height="6.5" fill="#da1f3d"/><rect x="0" y="0" width="6.5" height="2.4" fill="#2b2627"/></pattern>
<pattern id="op_big" width="6.5" height="9" patternUnits="userSpaceOnUse" patternTransform="skewY(20) skewX(-20)">
 <rect width="6.5" height="9" fill="#9a5ed2"/><rect x="1" y="2.5" width="2.6" height="2.2" fill="#fb8e12"/></pattern>
<pattern id="opr_big" width="6.5" height="9" patternUnits="userSpaceOnUse" patternTransform="skewY(-20) skewX(20)">
 <rect width="6.5" height="9" fill="#9a5ed2"/><rect x="1" y="2.5" width="2.6" height="2.2" fill="#fb8e12"/></pattern>
<pattern id="opu_big" width="6.2" height="20" patternUnits="userSpaceOnUse" patternTransform="skewY(-27) skewX(18)">
 <rect width="6.2" height="20" fill="#9a5ed2"/><rect x="1.3" y="3" width="3.2" height="11" fill="#fb8e12"/></pattern>
<pattern id="bp_big" width="7" height="8" patternUnits="userSpaceOnUse" patternTransform="skewY(12)">
 <rect width="7" height="8" fill="#9a5ed2"/><rect x="2" y="2" width="2.8" height="3" fill="#2b2627"/></pattern>
<pattern id="opk_big" width="5.5" height="11" patternUnits="userSpaceOnUse" patternTransform="skewY(-30)">
 <rect width="5.5" height="11" fill="#f46fbb"/><rect x="1" y="3" width="2.8" height="5" fill="#fb8e12"/></pattern>
<pattern id="opkr_big" width="5.5" height="11" patternUnits="userSpaceOnUse" patternTransform="skewY(-30)">
 <rect width="5.5" height="11" fill="#f46fbb"/><rect x="1" y="3" width="2.8" height="5" fill="#fb8e12"/></pattern>
<pattern id="bpk_big" width="7.5" height="11" patternUnits="userSpaceOnUse" patternTransform="skewY(-26)">
 <rect width="7.5" height="11" fill="#f46fbb"/><rect x="2" y="3" width="2.8" height="4.5" fill="#2b2627"/></pattern>
<pattern id="bpkr_big" width="7.5" height="11" patternUnits="userSpaceOnUse" patternTransform="skewY(-26)">
 <rect width="7.5" height="11" fill="#f46fbb"/><rect x="2" y="3" width="2.8" height="4.5" fill="#2b2627"/></pattern>
<pattern id="zz_big" width="5" height="16" patternUnits="userSpaceOnUse" patternTransform="translate(0,570)">
 <rect width="5" height="16" fill="#dc1a3a"/><path d="M0,0 L2.5,12 L5,0Z" fill="#fb8e12"/><path d="M1.5,0 L2.5,5 L3.5,0Z" fill="#da1f3d"/></pattern>
<pattern id="zzb_big" width="5" height="16" patternUnits="userSpaceOnUse" patternTransform="translate(0,570)">
 <rect width="5" height="16" fill="#dc1a3a"/><path d="M0,0 L2.5,11 L5,0Z" fill="#2b2627"/></pattern>
<pattern id="rbase_big" width="4" height="5" patternUnits="userSpaceOnUse" patternTransform="skewX(-25)">
 <rect width="4" height="5" fill="#dc1a3a"/><rect x="0" y="0" width="1.5" height="5" fill="#a8142c" opacity="0.45"/></pattern>
</defs>
<g clip-path="url(#clip_big)"><path d="M739.5,166.7 C734.4,168.1 717.1,172.6 709.6,175.2 C702.1,177.8 699.6,179.9 694.6,182.4 C689.6,184.9 684.7,186.9 679.7,189.9 C674.7,192.9 669.7,196.9 664.7,200.4 C659.7,203.9 654.8,207.1 649.8,210.8 C644.8,214.5 639.8,218.6 634.8,222.8 C629.8,227.0 624.1,231.2 619.9,236.2 C615.7,241.2 612.7,247.6 609.4,252.7 C606.1,257.8 603.6,261.1 600.0,267.0 C596.4,272.9 591.7,280.5 588.0,288.0 C584.3,295.5 580.9,303.5 578.0,312.0 C575.1,320.5 572.3,331.0 570.5,339.0 C568.7,347.0 567.8,349.0 567.0,360.0 C566.2,371.0 565.6,391.7 565.5,405.0 C565.4,418.3 566.3,429.7 566.5,440.0 C566.7,450.3 565.8,460.7 566.5,467.0 C567.2,473.3 568.1,474.7 570.7,478.0 C573.3,481.3 578.0,484.3 582.0,487.0 C586.0,489.7 590.9,490.7 595.0,494.0 C599.1,497.3 603.7,503.2 606.5,507.0 C609.3,510.8 609.4,512.5 612.0,517.0 C614.6,521.5 618.8,528.5 622.0,534.0 C625.2,539.5 628.3,545.2 631.0,550.0 C633.7,554.8 636.1,559.5 638.0,563.0 C639.9,566.5 641.9,568.7 642.4,571.0 C642.9,573.3 641.3,573.7 640.8,577.0 C640.3,580.3 639.0,586.2 639.6,591.0 C640.2,595.8 641.6,601.9 644.4,605.5 C647.2,609.1 638.9,610.9 656.5,612.7 C674.1,614.5 718.8,616.3 750.0,616.3 C781.2,616.3 826.1,614.9 844.0,612.7 C861.9,610.5 854.5,606.6 857.3,603.0 C860.1,599.4 860.8,595.3 861.0,591.0 C861.2,586.7 859.6,580.2 858.5,577.0 C857.4,573.8 853.8,575.4 854.6,572.0 C855.5,568.6 860.2,562.5 863.6,556.5 C867.0,550.5 871.2,542.9 874.8,536.3 C878.4,529.7 882.4,521.5 885.0,517.0 C887.6,512.5 888.5,512.6 890.5,509.4 C892.5,506.2 894.8,501.6 897.0,498.0 C899.2,494.4 901.3,490.6 904.0,488.0 C906.7,485.4 909.7,485.4 913.0,482.6 C916.3,479.8 921.4,475.2 924.0,471.4 C926.6,467.6 928.6,465.2 928.6,460.0 C928.6,454.8 924.9,449.2 924.0,440.0 C923.1,430.8 923.7,418.3 923.0,405.0 C922.3,391.7 920.8,370.8 920.0,360.0 C919.2,349.2 919.3,346.3 918.0,340.5 C916.7,334.7 914.3,330.8 912.0,325.0 C909.7,319.2 906.8,312.0 904.0,305.5 C901.2,299.0 898.2,292.1 895.0,286.0 C891.8,279.9 888.0,273.4 885.0,268.6 C882.0,263.8 879.8,261.4 877.2,257.2 C874.7,253.0 872.5,248.2 869.7,243.7 C867.0,239.2 864.9,234.8 860.7,230.3 C856.5,225.8 849.5,221.1 844.3,216.8 C839.1,212.6 834.5,208.7 829.3,204.8 C824.1,200.9 818.7,197.1 813.0,193.6 C807.3,190.1 800.5,186.7 795.0,184.0 C789.5,181.3 784.5,179.5 780.0,177.5 C775.5,175.5 774.6,173.8 768.0,172.0 C761.4,170.2 745.2,167.6 740.5,166.7 C735.8,165.8 744.6,165.3 739.5,166.7Z" fill="#da1f3d"/>
<clipPath id="capL_big"><path d="M560.0,160.0 L712.0,160.0 L714.0,226.0 L617.0,244.0 L560.0,262.0Z"/></clipPath>
<clipPath id="capR_big"><path d="M772.0,160.0 L935.0,160.0 L935.0,262.0 L864.0,244.0 L770.0,226.0Z"/></clipPath>
<clipPath id="capC_big"><path d="M712.0,160.0 L772.0,160.0 L770.0,227.0 L714.0,227.0Z"/></clipPath>
<g clip-path="url(#capL_big)"><path d="M568.0,390.1 L572.0,366.6 L576.0,350.1 L580.0,336.3 L584.0,325.2 L588.0,314.2 L592.0,306.1 L596.0,298.1 L600.0,290.0 L604.0,283.0 L608.0,276.0 L612.0,268.9 L616.0,261.7 L620.0,254.5 L624.0,250.4 L628.0,246.2 L632.0,242.1 L636.0,238.1 L640.0,234.4 L644.0,230.8 L648.0,227.1 L652.0,223.6 L656.0,220.4 L660.0,217.2 L664.0,214.0 L668.0,210.8 L672.0,207.6 L676.0,204.4 L680.0,201.2 L684.0,198.9 L688.0,196.6 L692.0,194.3 L696.0,192.0 L700.0,189.8 L704.0,187.6 L708.0,185.4 L712.0,183.7 L716.0,182.4 L720.0,181.1 L724.0,179.8 L728.0,178.5 L732.0,177.2 L736.0,175.8 L740.0,174.8 L744.0,175.7 L748.0,176.5 L752.0,177.4 L756.0,178.2 L760.0,179.1 L764.0,179.9 L768.0,180.8 L772.0,182.9 L776.0,185.0 L780.0,187.1 L784.0,189.1 L788.0,191.1 L792.0,193.1 L796.0,195.2 L800.0,197.7 L804.0,200.1 L808.0,202.6 L812.0,205.0 L816.0,208.0 L820.0,211.2 L824.0,214.3 L828.0,217.5 L832.0,221.0 L836.0,224.7 L840.0,228.4 L844.0,232.0 L848.0,235.8 L852.0,239.6 L856.0,243.4 L860.0,247.2 L864.0,253.5 L868.0,260.3 L872.0,268.0 L876.0,276.3 L880.0,283.5 L884.0,290.2 L888.0,297.9 L892.0,305.9 L896.0,314.4 L900.0,324.4 L904.0,334.3 L908.0,345.5 L912.0,356.7 L916.0,368.6 M568.0,385.3 L572.0,363.1 L576.0,347.5 L580.0,334.4 L584.0,324.0 L588.0,313.6 L592.0,306.0 L596.0,298.4 L600.0,290.8 L604.0,284.2 L608.0,277.6 L612.0,270.8 L616.0,264.0 L620.0,257.3 L624.0,253.4 L628.0,249.4 L632.0,245.5 L636.0,241.8 L640.0,238.3 L644.0,234.8 L648.0,231.3 L652.0,228.1 L656.0,225.1 L660.0,222.1 L664.0,219.0 L668.0,216.0 L672.0,212.9 L676.0,209.9 L680.0,206.9 L684.0,204.7 L688.0,202.6 L692.0,200.4 L696.0,198.2 L700.0,196.1 L704.0,194.0 L708.0,192.0 L712.0,190.4 L716.0,189.2 L720.0,187.9 L724.0,186.7 L728.0,185.4 L732.0,184.2 L736.0,183.0 L740.0,182.0 L744.0,182.8 L748.0,183.6 L752.0,184.4 L756.0,185.2 L760.0,186.0 L764.0,186.8 L768.0,187.7 L772.0,189.6 L776.0,191.6 L780.0,193.6 L784.0,195.5 L788.0,197.4 L792.0,199.3 L796.0,201.3 L800.0,203.6 L804.0,205.9 L808.0,208.2 L812.0,210.5 L816.0,213.3 L820.0,216.3 L824.0,219.3 L828.0,222.3 L832.0,225.6 L836.0,229.1 L840.0,232.6 L844.0,236.0 L848.0,239.6 L852.0,243.2 L856.0,246.8 L860.0,250.3 L864.0,256.3 L868.0,262.8 L872.0,270.0 L876.0,277.8 L880.0,284.6 L884.0,290.9 L888.0,298.2 L892.0,305.8 L896.0,313.8 L900.0,323.2 L904.0,332.6 L908.0,343.2 L912.0,353.8 L916.0,365.0 M568.0,380.4 L572.0,359.6 L576.0,344.9 L580.0,332.6 L584.0,322.8 L588.0,313.0 L592.0,305.8 L596.0,298.7 L600.0,291.5 L604.0,285.3 L608.0,279.1 L612.0,272.8 L616.0,266.3 L620.0,260.0 L624.0,256.3 L628.0,252.6 L632.0,249.0 L636.0,245.4 L640.0,242.2 L644.0,238.9 L648.0,235.6 L652.0,232.6 L656.0,229.7 L660.0,226.9 L664.0,224.0 L668.0,221.2 L672.0,218.3 L676.0,215.4 L680.0,212.6 L684.0,210.6 L688.0,208.5 L692.0,206.5 L696.0,204.5 L700.0,202.5 L704.0,200.5 L708.0,198.6 L712.0,197.1 L716.0,195.9 L720.0,194.8 L724.0,193.6 L728.0,192.4 L732.0,191.3 L736.0,190.1 L740.0,189.2 L744.0,190.0 L748.0,190.7 L752.0,191.5 L756.0,192.2 L760.0,193.0 L764.0,193.8 L768.0,194.5 L772.0,196.4 L776.0,198.3 L780.0,200.1 L784.0,201.9 L788.0,203.7 L792.0,205.4 L796.0,207.3 L800.0,209.5 L804.0,211.7 L808.0,213.9 L812.0,216.0 L816.0,218.7 L820.0,221.5 L824.0,224.3 L828.0,227.1 L832.0,230.2 L836.0,233.5 L840.0,236.8 L844.0,240.0 L848.0,243.4 L852.0,246.7 L856.0,250.1 L860.0,253.5 L864.0,259.1 L868.0,265.2 L872.0,272.0 L876.0,279.3 L880.0,285.7 L884.0,291.7 L888.0,298.5 L892.0,305.6 L896.0,313.2 L900.0,322.0 L904.0,330.9 L908.0,340.8 L912.0,350.8 L916.0,361.3 M568.0,375.6 L572.0,356.0 L576.0,342.3 L580.0,330.8 L584.0,321.6 L588.0,312.4 L592.0,305.7 L596.0,299.0 L600.0,292.3 L604.0,286.5 L608.0,280.7 L612.0,274.7 L616.0,268.7 L620.0,262.7 L624.0,259.3 L628.0,255.8 L632.0,252.4 L636.0,249.1 L640.0,246.0 L644.0,243.0 L648.0,239.9 L652.0,237.0 L656.0,234.4 L660.0,231.7 L664.0,229.0 L668.0,226.3 L672.0,223.7 L676.0,221.0 L680.0,218.4 L684.0,216.4 L688.0,214.5 L692.0,212.6 L696.0,210.7 L700.0,208.8 L704.0,207.0 L708.0,205.2 L712.0,203.8 L716.0,202.7 L720.0,201.6 L724.0,200.5 L728.0,199.4 L732.0,198.3 L736.0,197.3 L740.0,196.4 L744.0,197.1 L748.0,197.8 L752.0,198.5 L756.0,199.2 L760.0,199.9 L764.0,200.7 L768.0,201.4 L772.0,203.1 L776.0,204.9 L780.0,206.6 L784.0,208.3 L788.0,210.0 L792.0,211.6 L796.0,213.4 L800.0,215.4 L804.0,217.5 L808.0,219.5 L812.0,221.5 L816.0,224.0 L820.0,226.7 L824.0,229.3 L828.0,231.9 L832.0,234.8 L836.0,237.9 L840.0,241.0 L844.0,244.0 L848.0,247.2 L852.0,250.3 L856.0,253.5 L860.0,256.6 L864.0,261.9 L868.0,267.6 L872.0,274.0 L876.0,280.9 L880.0,286.8 L884.0,292.4 L888.0,298.8 L892.0,305.5 L896.0,312.6 L900.0,320.9 L904.0,329.2 L908.0,338.5 L912.0,347.8 L916.0,357.7 M568.0,370.7 L572.0,352.5 L576.0,339.7 L580.0,328.9 L584.0,320.4 L588.0,311.8 L592.0,305.6 L596.0,299.3 L600.0,293.1 L604.0,287.6 L608.0,282.2 L612.0,276.6 L616.0,271.0 L620.0,265.5 L624.0,262.3 L628.0,259.0 L632.0,255.8 L636.0,252.7 L640.0,249.9 L644.0,247.0 L648.0,244.2 L652.0,241.5 L656.0,239.0 L660.0,236.5 L664.0,234.0 L668.0,231.5 L672.0,229.0 L676.0,226.5 L680.0,224.1 L684.0,222.3 L688.0,220.5 L692.0,218.7 L696.0,216.9 L700.0,215.2 L704.0,213.5 L708.0,211.8 L712.0,210.5 L716.0,209.5 L720.0,208.4 L724.0,207.4 L728.0,206.4 L732.0,205.4 L736.0,204.4 L740.0,203.6 L744.0,204.2 L748.0,204.9 L752.0,205.6 L756.0,206.2 L760.0,206.9 L764.0,207.6 L768.0,208.2 L772.0,209.9 L776.0,211.5 L780.0,213.1 L784.0,214.7 L788.0,216.2 L792.0,217.8 L796.0,219.4 L800.0,221.3 L804.0,223.2 L808.0,225.1 L812.0,227.0 L816.0,229.4 L820.0,231.8 L824.0,234.3 L828.0,236.7 L832.0,239.4 L836.0,242.3 L840.0,245.2 L844.0,248.0 L848.0,251.0 L852.0,253.9 L856.0,256.8 L860.0,259.8 L864.0,264.7 L868.0,270.0 L872.0,275.9 L876.0,282.4 L880.0,288.0 L884.0,293.2 L888.0,299.1 L892.0,305.4 L896.0,312.0 L900.0,319.7 L904.0,327.4 L908.0,336.1 L912.0,344.8 L916.0,354.1 M568.0,365.9 L572.0,349.0 L576.0,337.1 L580.0,327.1 L584.0,319.2 L588.0,311.2 L592.0,305.4 L596.0,299.6 L600.0,293.8 L604.0,288.8 L608.0,283.7 L612.0,278.6 L616.0,273.4 L620.0,268.2 L624.0,265.2 L628.0,262.2 L632.0,259.3 L636.0,256.4 L640.0,253.7 L644.0,251.1 L648.0,248.4 L652.0,246.0 L656.0,243.7 L660.0,241.3 L664.0,239.0 L668.0,236.7 L672.0,234.4 L676.0,232.1 L680.0,229.8 L684.0,228.1 L688.0,226.5 L692.0,224.8 L696.0,223.2 L700.0,221.6 L704.0,220.0 L708.0,218.4 L712.0,217.2 L716.0,216.2 L720.0,215.3 L724.0,214.4 L728.0,213.4 L732.0,212.5 L736.0,211.5 L740.0,210.8 L744.0,211.4 L748.0,212.0 L752.0,212.6 L756.0,213.2 L760.0,213.9 L764.0,214.5 L768.0,215.1 L772.0,216.6 L776.0,218.1 L780.0,219.6 L784.0,221.1 L788.0,222.5 L792.0,224.0 L796.0,225.5 L800.0,227.2 L804.0,229.0 L808.0,230.8 L812.0,232.5 L816.0,234.7 L820.0,237.0 L824.0,239.3 L828.0,241.5 L832.0,244.1 L836.0,246.7 L840.0,249.4 L844.0,252.0 L848.0,254.7 L852.0,257.5 L856.0,260.2 L860.0,262.9 L864.0,267.5 L868.0,272.4 L872.0,277.9 L876.0,283.9 L880.0,289.1 L884.0,293.9 L888.0,299.5 L892.0,305.2 L896.0,311.3 L900.0,318.5 L904.0,325.7 L908.0,333.8 L912.0,341.9 L916.0,350.4 M568.0,361.1 L572.0,345.5 L576.0,334.5 L580.0,325.3 L584.0,317.9 L588.0,310.6 L592.0,305.3 L596.0,299.9 L600.0,294.6 L604.0,289.9 L608.0,285.3 L612.0,280.5 L616.0,275.7 L620.0,270.9 L624.0,268.2 L628.0,265.5 L632.0,262.7 L636.0,260.0 L640.0,257.6 L644.0,255.2 L648.0,252.7 L652.0,250.4 L656.0,248.3 L660.0,246.2 L664.0,244.0 L668.0,241.9 L672.0,239.8 L676.0,237.6 L680.0,235.5 L684.0,234.0 L688.0,232.4 L692.0,230.9 L696.0,229.4 L700.0,227.9 L704.0,226.5 L708.0,225.0 L712.0,223.9 L716.0,223.0 L720.0,222.1 L724.0,221.3 L728.0,220.4 L732.0,219.5 L736.0,218.7 L740.0,218.0 L744.0,218.5 L748.0,219.1 L752.0,219.7 L756.0,220.2 L760.0,220.8 L764.0,221.4 L768.0,222.0 L772.0,223.4 L776.0,224.8 L780.0,226.2 L784.0,227.5 L788.0,228.8 L792.0,230.1 L796.0,231.5 L800.0,233.2 L804.0,234.8 L808.0,236.4 L812.0,238.1 L816.0,240.0 L820.0,242.1 L824.0,244.2 L828.0,246.3 L832.0,248.7 L836.0,251.1 L840.0,253.6 L844.0,256.0 L848.0,258.5 L852.0,261.0 L856.0,263.6 L860.0,266.1 L864.0,270.3 L868.0,274.8 L872.0,279.9 L876.0,285.4 L880.0,290.2 L884.0,294.7 L888.0,299.8 L892.0,305.1 L896.0,310.7 L900.0,317.4 L904.0,324.0 L908.0,331.4 L912.0,338.9 L916.0,346.8 M568.0,356.2 L572.0,341.9 L576.0,331.9 L580.0,323.5 L584.0,316.7 L588.0,310.0 L592.0,305.1 L596.0,300.2 L600.0,295.3 L604.0,291.1 L608.0,286.8 L612.0,282.4 L616.0,278.0 L620.0,273.7 L624.0,271.2 L628.0,268.7 L632.0,266.1 L636.0,263.7 L640.0,261.5 L644.0,259.2 L648.0,257.0 L652.0,254.9 L656.0,252.9 L660.0,251.0 L664.0,249.0 L668.0,247.1 L672.0,245.1 L676.0,243.2 L680.0,241.2 L684.0,239.8 L688.0,238.4 L692.0,237.0 L696.0,235.6 L700.0,234.3 L704.0,232.9 L708.0,231.6 L712.0,230.6 L716.0,229.8 L720.0,229.0 L724.0,228.2 L728.0,227.4 L732.0,226.6 L736.0,225.8 L740.0,225.2 L744.0,225.7 L748.0,226.2 L752.0,226.7 L756.0,227.2 L760.0,227.8 L764.0,228.3 L768.0,228.8 L772.0,230.1 L776.0,231.4 L780.0,232.7 L784.0,233.9 L788.0,235.1 L792.0,236.3 L796.0,237.6 L800.0,239.1 L804.0,240.6 L808.0,242.1 L812.0,243.6 L816.0,245.4 L820.0,247.3 L824.0,249.2 L828.0,251.1 L832.0,253.3 L836.0,255.5 L840.0,257.8 L844.0,260.0 L848.0,262.3 L852.0,264.6 L856.0,266.9 L860.0,269.2 L864.0,273.1 L868.0,277.2 L872.0,281.9 L876.0,286.9 L880.0,291.3 L884.0,295.4 L888.0,300.1 L892.0,305.0 L896.0,310.1 L900.0,316.2 L904.0,322.3 L908.0,329.1 L912.0,335.9 L916.0,343.1" stroke="#fb8e12" stroke-width="2.4" stroke-dasharray="3 1.6" fill="none" opacity="0.85"/></g>
<g clip-path="url(#capR_big)"><path d="M568.0,390.1 L572.0,366.6 L576.0,350.1 L580.0,336.3 L584.0,325.2 L588.0,314.2 L592.0,306.1 L596.0,298.1 L600.0,290.0 L604.0,283.0 L608.0,276.0 L612.0,268.9 L616.0,261.7 L620.0,254.5 L624.0,250.4 L628.0,246.2 L632.0,242.1 L636.0,238.1 L640.0,234.4 L644.0,230.8 L648.0,227.1 L652.0,223.6 L656.0,220.4 L660.0,217.2 L664.0,214.0 L668.0,210.8 L672.0,207.6 L676.0,204.4 L680.0,201.2 L684.0,198.9 L688.0,196.6 L692.0,194.3 L696.0,192.0 L700.0,189.8 L704.0,187.6 L708.0,185.4 L712.0,183.7 L716.0,182.4 L720.0,181.1 L724.0,179.8 L728.0,178.5 L732.0,177.2 L736.0,175.8 L740.0,174.8 L744.0,175.7 L748.0,176.5 L752.0,177.4 L756.0,178.2 L760.0,179.1 L764.0,179.9 L768.0,180.8 L772.0,182.9 L776.0,185.0 L780.0,187.1 L784.0,189.1 L788.0,191.1 L792.0,193.1 L796.0,195.2 L800.0,197.7 L804.0,200.1 L808.0,202.6 L812.0,205.0 L816.0,208.0 L820.0,211.2 L824.0,214.3 L828.0,217.5 L832.0,221.0 L836.0,224.7 L840.0,228.4 L844.0,232.0 L848.0,235.8 L852.0,239.6 L856.0,243.4 L860.0,247.2 L864.0,253.5 L868.0,260.3 L872.0,268.0 L876.0,276.3 L880.0,283.5 L884.0,290.2 L888.0,297.9 L892.0,305.9 L896.0,314.4 L900.0,324.4 L904.0,334.3 L908.0,345.5 L912.0,356.7 L916.0,368.6 M568.0,385.3 L572.0,363.1 L576.0,347.5 L580.0,334.4 L584.0,324.0 L588.0,313.6 L592.0,306.0 L596.0,298.4 L600.0,290.8 L604.0,284.2 L608.0,277.6 L612.0,270.8 L616.0,264.0 L620.0,257.3 L624.0,253.4 L628.0,249.4 L632.0,245.5 L636.0,241.8 L640.0,238.3 L644.0,234.8 L648.0,231.3 L652.0,228.1 L656.0,225.1 L660.0,222.1 L664.0,219.0 L668.0,216.0 L672.0,212.9 L676.0,209.9 L680.0,206.9 L684.0,204.7 L688.0,202.6 L692.0,200.4 L696.0,198.2 L700.0,196.1 L704.0,194.0 L708.0,192.0 L712.0,190.4 L716.0,189.2 L720.0,187.9 L724.0,186.7 L728.0,185.4 L732.0,184.2 L736.0,183.0 L740.0,182.0 L744.0,182.8 L748.0,183.6 L752.0,184.4 L756.0,185.2 L760.0,186.0 L764.0,186.8 L768.0,187.7 L772.0,189.6 L776.0,191.6 L780.0,193.6 L784.0,195.5 L788.0,197.4 L792.0,199.3 L796.0,201.3 L800.0,203.6 L804.0,205.9 L808.0,208.2 L812.0,210.5 L816.0,213.3 L820.0,216.3 L824.0,219.3 L828.0,222.3 L832.0,225.6 L836.0,229.1 L840.0,232.6 L844.0,236.0 L848.0,239.6 L852.0,243.2 L856.0,246.8 L860.0,250.3 L864.0,256.3 L868.0,262.8 L872.0,270.0 L876.0,277.8 L880.0,284.6 L884.0,290.9 L888.0,298.2 L892.0,305.8 L896.0,313.8 L900.0,323.2 L904.0,332.6 L908.0,343.2 L912.0,353.8 L916.0,365.0 M568.0,380.4 L572.0,359.6 L576.0,344.9 L580.0,332.6 L584.0,322.8 L588.0,313.0 L592.0,305.8 L596.0,298.7 L600.0,291.5 L604.0,285.3 L608.0,279.1 L612.0,272.8 L616.0,266.3 L620.0,260.0 L624.0,256.3 L628.0,252.6 L632.0,249.0 L636.0,245.4 L640.0,242.2 L644.0,238.9 L648.0,235.6 L652.0,232.6 L656.0,229.7 L660.0,226.9 L664.0,224.0 L668.0,221.2 L672.0,218.3 L676.0,215.4 L680.0,212.6 L684.0,210.6 L688.0,208.5 L692.0,206.5 L696.0,204.5 L700.0,202.5 L704.0,200.5 L708.0,198.6 L712.0,197.1 L716.0,195.9 L720.0,194.8 L724.0,193.6 L728.0,192.4 L732.0,191.3 L736.0,190.1 L740.0,189.2 L744.0,190.0 L748.0,190.7 L752.0,191.5 L756.0,192.2 L760.0,193.0 L764.0,193.8 L768.0,194.5 L772.0,196.4 L776.0,198.3 L780.0,200.1 L784.0,201.9 L788.0,203.7 L792.0,205.4 L796.0,207.3 L800.0,209.5 L804.0,211.7 L808.0,213.9 L812.0,216.0 L816.0,218.7 L820.0,221.5 L824.0,224.3 L828.0,227.1 L832.0,230.2 L836.0,233.5 L840.0,236.8 L844.0,240.0 L848.0,243.4 L852.0,246.7 L856.0,250.1 L860.0,253.5 L864.0,259.1 L868.0,265.2 L872.0,272.0 L876.0,279.3 L880.0,285.7 L884.0,291.7 L888.0,298.5 L892.0,305.6 L896.0,313.2 L900.0,322.0 L904.0,330.9 L908.0,340.8 L912.0,350.8 L916.0,361.3 M568.0,375.6 L572.0,356.0 L576.0,342.3 L580.0,330.8 L584.0,321.6 L588.0,312.4 L592.0,305.7 L596.0,299.0 L600.0,292.3 L604.0,286.5 L608.0,280.7 L612.0,274.7 L616.0,268.7 L620.0,262.7 L624.0,259.3 L628.0,255.8 L632.0,252.4 L636.0,249.1 L640.0,246.0 L644.0,243.0 L648.0,239.9 L652.0,237.0 L656.0,234.4 L660.0,231.7 L664.0,229.0 L668.0,226.3 L672.0,223.7 L676.0,221.0 L680.0,218.4 L684.0,216.4 L688.0,214.5 L692.0,212.6 L696.0,210.7 L700.0,208.8 L704.0,207.0 L708.0,205.2 L712.0,203.8 L716.0,202.7 L720.0,201.6 L724.0,200.5 L728.0,199.4 L732.0,198.3 L736.0,197.3 L740.0,196.4 L744.0,197.1 L748.0,197.8 L752.0,198.5 L756.0,199.2 L760.0,199.9 L764.0,200.7 L768.0,201.4 L772.0,203.1 L776.0,204.9 L780.0,206.6 L784.0,208.3 L788.0,210.0 L792.0,211.6 L796.0,213.4 L800.0,215.4 L804.0,217.5 L808.0,219.5 L812.0,221.5 L816.0,224.0 L820.0,226.7 L824.0,229.3 L828.0,231.9 L832.0,234.8 L836.0,237.9 L840.0,241.0 L844.0,244.0 L848.0,247.2 L852.0,250.3 L856.0,253.5 L860.0,256.6 L864.0,261.9 L868.0,267.6 L872.0,274.0 L876.0,280.9 L880.0,286.8 L884.0,292.4 L888.0,298.8 L892.0,305.5 L896.0,312.6 L900.0,320.9 L904.0,329.2 L908.0,338.5 L912.0,347.8 L916.0,357.7 M568.0,370.7 L572.0,352.5 L576.0,339.7 L580.0,328.9 L584.0,320.4 L588.0,311.8 L592.0,305.6 L596.0,299.3 L600.0,293.1 L604.0,287.6 L608.0,282.2 L612.0,276.6 L616.0,271.0 L620.0,265.5 L624.0,262.3 L628.0,259.0 L632.0,255.8 L636.0,252.7 L640.0,249.9 L644.0,247.0 L648.0,244.2 L652.0,241.5 L656.0,239.0 L660.0,236.5 L664.0,234.0 L668.0,231.5 L672.0,229.0 L676.0,226.5 L680.0,224.1 L684.0,222.3 L688.0,220.5 L692.0,218.7 L696.0,216.9 L700.0,215.2 L704.0,213.5 L708.0,211.8 L712.0,210.5 L716.0,209.5 L720.0,208.4 L724.0,207.4 L728.0,206.4 L732.0,205.4 L736.0,204.4 L740.0,203.6 L744.0,204.2 L748.0,204.9 L752.0,205.6 L756.0,206.2 L760.0,206.9 L764.0,207.6 L768.0,208.2 L772.0,209.9 L776.0,211.5 L780.0,213.1 L784.0,214.7 L788.0,216.2 L792.0,217.8 L796.0,219.4 L800.0,221.3 L804.0,223.2 L808.0,225.1 L812.0,227.0 L816.0,229.4 L820.0,231.8 L824.0,234.3 L828.0,236.7 L832.0,239.4 L836.0,242.3 L840.0,245.2 L844.0,248.0 L848.0,251.0 L852.0,253.9 L856.0,256.8 L860.0,259.8 L864.0,264.7 L868.0,270.0 L872.0,275.9 L876.0,282.4 L880.0,288.0 L884.0,293.2 L888.0,299.1 L892.0,305.4 L896.0,312.0 L900.0,319.7 L904.0,327.4 L908.0,336.1 L912.0,344.8 L916.0,354.1 M568.0,365.9 L572.0,349.0 L576.0,337.1 L580.0,327.1 L584.0,319.2 L588.0,311.2 L592.0,305.4 L596.0,299.6 L600.0,293.8 L604.0,288.8 L608.0,283.7 L612.0,278.6 L616.0,273.4 L620.0,268.2 L624.0,265.2 L628.0,262.2 L632.0,259.3 L636.0,256.4 L640.0,253.7 L644.0,251.1 L648.0,248.4 L652.0,246.0 L656.0,243.7 L660.0,241.3 L664.0,239.0 L668.0,236.7 L672.0,234.4 L676.0,232.1 L680.0,229.8 L684.0,228.1 L688.0,226.5 L692.0,224.8 L696.0,223.2 L700.0,221.6 L704.0,220.0 L708.0,218.4 L712.0,217.2 L716.0,216.2 L720.0,215.3 L724.0,214.4 L728.0,213.4 L732.0,212.5 L736.0,211.5 L740.0,210.8 L744.0,211.4 L748.0,212.0 L752.0,212.6 L756.0,213.2 L760.0,213.9 L764.0,214.5 L768.0,215.1 L772.0,216.6 L776.0,218.1 L780.0,219.6 L784.0,221.1 L788.0,222.5 L792.0,224.0 L796.0,225.5 L800.0,227.2 L804.0,229.0 L808.0,230.8 L812.0,232.5 L816.0,234.7 L820.0,237.0 L824.0,239.3 L828.0,241.5 L832.0,244.1 L836.0,246.7 L840.0,249.4 L844.0,252.0 L848.0,254.7 L852.0,257.5 L856.0,260.2 L860.0,262.9 L864.0,267.5 L868.0,272.4 L872.0,277.9 L876.0,283.9 L880.0,289.1 L884.0,293.9 L888.0,299.5 L892.0,305.2 L896.0,311.3 L900.0,318.5 L904.0,325.7 L908.0,333.8 L912.0,341.9 L916.0,350.4 M568.0,361.1 L572.0,345.5 L576.0,334.5 L580.0,325.3 L584.0,317.9 L588.0,310.6 L592.0,305.3 L596.0,299.9 L600.0,294.6 L604.0,289.9 L608.0,285.3 L612.0,280.5 L616.0,275.7 L620.0,270.9 L624.0,268.2 L628.0,265.5 L632.0,262.7 L636.0,260.0 L640.0,257.6 L644.0,255.2 L648.0,252.7 L652.0,250.4 L656.0,248.3 L660.0,246.2 L664.0,244.0 L668.0,241.9 L672.0,239.8 L676.0,237.6 L680.0,235.5 L684.0,234.0 L688.0,232.4 L692.0,230.9 L696.0,229.4 L700.0,227.9 L704.0,226.5 L708.0,225.0 L712.0,223.9 L716.0,223.0 L720.0,222.1 L724.0,221.3 L728.0,220.4 L732.0,219.5 L736.0,218.7 L740.0,218.0 L744.0,218.5 L748.0,219.1 L752.0,219.7 L756.0,220.2 L760.0,220.8 L764.0,221.4 L768.0,222.0 L772.0,223.4 L776.0,224.8 L780.0,226.2 L784.0,227.5 L788.0,228.8 L792.0,230.1 L796.0,231.5 L800.0,233.2 L804.0,234.8 L808.0,236.4 L812.0,238.1 L816.0,240.0 L820.0,242.1 L824.0,244.2 L828.0,246.3 L832.0,248.7 L836.0,251.1 L840.0,253.6 L844.0,256.0 L848.0,258.5 L852.0,261.0 L856.0,263.6 L860.0,266.1 L864.0,270.3 L868.0,274.8 L872.0,279.9 L876.0,285.4 L880.0,290.2 L884.0,294.7 L888.0,299.8 L892.0,305.1 L896.0,310.7 L900.0,317.4 L904.0,324.0 L908.0,331.4 L912.0,338.9 L916.0,346.8 M568.0,356.2 L572.0,341.9 L576.0,331.9 L580.0,323.5 L584.0,316.7 L588.0,310.0 L592.0,305.1 L596.0,300.2 L600.0,295.3 L604.0,291.1 L608.0,286.8 L612.0,282.4 L616.0,278.0 L620.0,273.7 L624.0,271.2 L628.0,268.7 L632.0,266.1 L636.0,263.7 L640.0,261.5 L644.0,259.2 L648.0,257.0 L652.0,254.9 L656.0,252.9 L660.0,251.0 L664.0,249.0 L668.0,247.1 L672.0,245.1 L676.0,243.2 L680.0,241.2 L684.0,239.8 L688.0,238.4 L692.0,237.0 L696.0,235.6 L700.0,234.3 L704.0,232.9 L708.0,231.6 L712.0,230.6 L716.0,229.8 L720.0,229.0 L724.0,228.2 L728.0,227.4 L732.0,226.6 L736.0,225.8 L740.0,225.2 L744.0,225.7 L748.0,226.2 L752.0,226.7 L756.0,227.2 L760.0,227.8 L764.0,228.3 L768.0,228.8 L772.0,230.1 L776.0,231.4 L780.0,232.7 L784.0,233.9 L788.0,235.1 L792.0,236.3 L796.0,237.6 L800.0,239.1 L804.0,240.6 L808.0,242.1 L812.0,243.6 L816.0,245.4 L820.0,247.3 L824.0,249.2 L828.0,251.1 L832.0,253.3 L836.0,255.5 L840.0,257.8 L844.0,260.0 L848.0,262.3 L852.0,264.6 L856.0,266.9 L860.0,269.2 L864.0,273.1 L868.0,277.2 L872.0,281.9 L876.0,286.9 L880.0,291.3 L884.0,295.4 L888.0,300.1 L892.0,305.0 L896.0,310.1 L900.0,316.2 L904.0,322.3 L908.0,329.1 L912.0,335.9 L916.0,343.1" stroke="#fb8e12" stroke-width="2.4" stroke-dasharray="3 1.6" fill="none" opacity="0.85"/></g>
<g clip-path="url(#capC_big)"><path d="M568.0,492.1 L572.0,457.4 L576.0,432.9 L580.0,412.6 L584.0,396.2 L588.0,379.9 L592.0,368.0 L596.0,356.1 L600.0,344.2 L604.0,333.9 L608.0,323.5 L612.0,313.0 L616.0,302.3 L620.0,291.7 L624.0,285.6 L628.0,279.5 L632.0,273.4 L636.0,267.4 L640.0,262.0 L644.0,256.6 L648.0,251.1 L652.0,246.1 L656.0,241.3 L660.0,236.6 L664.0,231.8 L668.0,227.1 L672.0,222.3 L676.0,217.5 L680.0,212.9 L684.0,209.5 L688.0,206.0 L692.0,202.6 L696.0,199.2 L700.0,196.0 L704.0,192.7 L708.0,189.5 L712.0,187.0 L716.0,185.1 L720.0,183.1 L724.0,181.2 L728.0,179.3 L732.0,177.3 L736.0,175.4 L740.0,173.9 L744.0,175.1 L748.0,176.4 L752.0,177.7 L756.0,178.9 L760.0,180.2 L764.0,181.4 L768.0,182.7 L772.0,185.8 L776.0,188.9 L780.0,192.1 L784.0,195.0 L788.0,198.0 L792.0,200.9 L796.0,204.0 L800.0,207.6 L804.0,211.3 L808.0,214.9 L812.0,218.5 L816.0,222.9 L820.0,227.6 L824.0,232.3 L828.0,237.0 L832.0,242.1 L836.0,247.6 L840.0,253.0 L844.0,258.5 L848.0,264.0 L852.0,269.6 L856.0,275.2 L860.0,280.8 L864.0,290.2 L868.0,300.3 L872.0,311.6 L876.0,323.9 L880.0,334.5 L884.0,344.4 L888.0,355.8 L892.0,367.6 L896.0,380.2 L900.0,394.9 L904.0,409.7 L908.0,426.2 L912.0,442.8 L916.0,460.4 M568.0,487.2 L572.0,453.8 L576.0,430.2 L580.0,410.6 L584.0,394.8 L588.0,379.1 L592.0,367.7 L596.0,356.2 L600.0,344.7 L604.0,334.8 L608.0,324.8 L612.0,314.6 L616.0,304.3 L620.0,294.2 L624.0,288.3 L628.0,282.4 L632.0,276.5 L636.0,270.8 L640.0,265.6 L644.0,260.3 L648.0,255.1 L652.0,250.2 L656.0,245.6 L660.0,241.1 L664.0,236.5 L668.0,231.9 L672.0,227.3 L676.0,222.7 L680.0,218.2 L684.0,214.9 L688.0,211.6 L692.0,208.4 L696.0,205.1 L700.0,202.0 L704.0,198.8 L708.0,195.7 L712.0,193.3 L716.0,191.4 L720.0,189.6 L724.0,187.7 L728.0,185.9 L732.0,184.0 L736.0,182.1 L740.0,180.7 L744.0,181.9 L748.0,183.1 L752.0,184.3 L756.0,185.5 L760.0,186.7 L764.0,188.0 L768.0,189.2 L772.0,192.2 L776.0,195.2 L780.0,198.2 L784.0,201.0 L788.0,203.9 L792.0,206.7 L796.0,209.7 L800.0,213.2 L804.0,216.7 L808.0,220.2 L812.0,223.7 L816.0,227.9 L820.0,232.4 L824.0,236.9 L828.0,241.4 L832.0,246.4 L836.0,251.7 L840.0,256.9 L844.0,262.1 L848.0,267.5 L852.0,272.9 L856.0,278.3 L860.0,283.7 L864.0,292.7 L868.0,302.4 L872.0,313.4 L876.0,325.2 L880.0,335.4 L884.0,345.0 L888.0,355.9 L892.0,367.3 L896.0,379.4 L900.0,393.6 L904.0,407.8 L908.0,423.8 L912.0,439.7 L916.0,456.6 M568.0,482.3 L572.0,450.2 L576.0,427.5 L580.0,408.6 L584.0,393.5 L588.0,378.3 L592.0,367.3 L596.0,356.3 L600.0,345.3 L604.0,335.7 L608.0,326.1 L612.0,316.3 L616.0,306.4 L620.0,296.6 L624.0,291.0 L628.0,285.3 L632.0,279.6 L636.0,274.1 L640.0,269.1 L644.0,264.1 L648.0,259.0 L652.0,254.3 L656.0,249.9 L660.0,245.5 L664.0,241.1 L668.0,236.7 L672.0,232.3 L676.0,227.9 L680.0,223.6 L684.0,220.4 L688.0,217.3 L692.0,214.1 L696.0,211.0 L700.0,207.9 L704.0,204.9 L708.0,201.9 L712.0,199.6 L716.0,197.8 L720.0,196.0 L724.0,194.2 L728.0,192.4 L732.0,190.7 L736.0,188.9 L740.0,187.4 L744.0,188.6 L748.0,189.8 L752.0,191.0 L756.0,192.1 L760.0,193.3 L764.0,194.5 L768.0,195.6 L772.0,198.5 L776.0,201.4 L780.0,204.3 L784.0,207.0 L788.0,209.8 L792.0,212.5 L796.0,215.4 L800.0,218.7 L804.0,222.1 L808.0,225.5 L812.0,228.8 L816.0,232.9 L820.0,237.2 L824.0,241.6 L828.0,245.9 L832.0,250.7 L836.0,255.7 L840.0,260.8 L844.0,265.8 L848.0,271.0 L852.0,276.2 L856.0,281.4 L860.0,286.6 L864.0,295.2 L868.0,304.6 L872.0,315.1 L876.0,326.4 L880.0,336.3 L884.0,345.5 L888.0,356.0 L892.0,367.0 L896.0,378.6 L900.0,392.3 L904.0,405.9 L908.0,421.3 L912.0,436.6 L916.0,452.9 M568.0,477.4 L572.0,446.5 L576.0,424.8 L580.0,406.6 L584.0,392.1 L588.0,377.6 L592.0,367.0 L596.0,356.4 L600.0,345.8 L604.0,336.6 L608.0,327.4 L612.0,318.0 L616.0,308.5 L620.0,299.1 L624.0,293.6 L628.0,288.2 L632.0,282.8 L636.0,277.5 L640.0,272.7 L644.0,267.8 L648.0,263.0 L652.0,258.5 L656.0,254.3 L660.0,250.0 L664.0,245.8 L668.0,241.6 L672.0,237.3 L676.0,233.1 L680.0,229.0 L684.0,225.9 L688.0,222.9 L692.0,219.8 L696.0,216.8 L700.0,213.9 L704.0,211.0 L708.0,208.1 L712.0,205.9 L716.0,204.2 L720.0,202.5 L724.0,200.8 L728.0,199.0 L732.0,197.3 L736.0,195.6 L740.0,194.2 L744.0,195.4 L748.0,196.5 L752.0,197.6 L756.0,198.7 L760.0,199.9 L764.0,201.0 L768.0,202.1 L772.0,204.9 L776.0,207.7 L780.0,210.4 L784.0,213.1 L788.0,215.7 L792.0,218.3 L796.0,221.1 L800.0,224.3 L804.0,227.5 L808.0,230.8 L812.0,234.0 L816.0,237.9 L820.0,242.1 L824.0,246.2 L828.0,250.4 L832.0,255.0 L836.0,259.8 L840.0,264.7 L844.0,269.5 L848.0,274.5 L852.0,279.5 L856.0,284.4 L860.0,289.4 L864.0,297.7 L868.0,306.7 L872.0,316.8 L876.0,327.7 L880.0,337.2 L884.0,346.0 L888.0,356.1 L892.0,366.6 L896.0,377.8 L900.0,390.9 L904.0,404.0 L908.0,418.8 L912.0,433.5 L916.0,449.2 M568.0,472.5 L572.0,442.9 L576.0,422.0 L580.0,404.6 L584.0,390.7 L588.0,376.8 L592.0,366.6 L596.0,356.5 L600.0,346.3 L604.0,337.5 L608.0,328.7 L612.0,319.7 L616.0,310.6 L620.0,301.5 L624.0,296.3 L628.0,291.1 L632.0,285.9 L636.0,280.9 L640.0,276.2 L644.0,271.6 L648.0,266.9 L652.0,262.6 L656.0,258.6 L660.0,254.5 L664.0,250.5 L668.0,246.4 L672.0,242.4 L676.0,238.3 L680.0,234.3 L684.0,231.4 L688.0,228.5 L692.0,225.6 L696.0,222.7 L700.0,219.9 L704.0,217.1 L708.0,214.3 L712.0,212.2 L716.0,210.6 L720.0,208.9 L724.0,207.3 L728.0,205.6 L732.0,204.0 L736.0,202.3 L740.0,201.0 L744.0,202.1 L748.0,203.2 L752.0,204.3 L756.0,205.3 L760.0,206.4 L764.0,207.5 L768.0,208.6 L772.0,211.2 L776.0,213.9 L780.0,216.6 L784.0,219.1 L788.0,221.6 L792.0,224.1 L796.0,226.8 L800.0,229.9 L804.0,232.9 L808.0,236.0 L812.0,239.1 L816.0,242.9 L820.0,246.9 L824.0,250.9 L828.0,254.8 L832.0,259.3 L836.0,263.9 L840.0,268.6 L844.0,273.2 L848.0,278.0 L852.0,282.7 L856.0,287.5 L860.0,292.3 L864.0,300.2 L868.0,308.9 L872.0,318.6 L876.0,329.0 L880.0,338.1 L884.0,346.5 L888.0,356.2 L892.0,366.3 L896.0,377.0 L900.0,389.6 L904.0,402.2 L908.0,416.3 L912.0,430.4 L916.0,445.4 M568.0,467.6 L572.0,439.3 L576.0,419.3 L580.0,402.6 L584.0,389.3 L588.0,376.0 L592.0,366.3 L596.0,356.6 L600.0,346.9 L604.0,338.4 L608.0,330.0 L612.0,321.4 L616.0,312.6 L620.0,304.0 L624.0,299.0 L628.0,294.0 L632.0,289.0 L636.0,284.2 L640.0,279.8 L644.0,275.3 L648.0,270.9 L652.0,266.8 L656.0,262.9 L660.0,259.0 L664.0,255.1 L668.0,251.3 L672.0,247.4 L676.0,243.5 L680.0,239.7 L684.0,236.9 L688.0,234.1 L692.0,231.3 L696.0,228.6 L700.0,225.9 L704.0,223.2 L708.0,220.6 L712.0,218.5 L716.0,217.0 L720.0,215.4 L724.0,213.8 L728.0,212.2 L732.0,210.7 L736.0,209.1 L740.0,207.8 L744.0,208.9 L748.0,209.9 L752.0,210.9 L756.0,212.0 L760.0,213.0 L764.0,214.0 L768.0,215.1 L772.0,217.6 L776.0,220.1 L780.0,222.7 L784.0,225.1 L788.0,227.5 L792.0,229.9 L796.0,232.4 L800.0,235.4 L804.0,238.4 L808.0,241.3 L812.0,244.3 L816.0,247.9 L820.0,251.7 L824.0,255.5 L828.0,259.3 L832.0,263.6 L836.0,268.0 L840.0,272.4 L844.0,276.9 L848.0,281.4 L852.0,286.0 L856.0,290.6 L860.0,295.1 L864.0,302.8 L868.0,311.0 L872.0,320.3 L876.0,330.3 L880.0,338.9 L884.0,347.1 L888.0,356.3 L892.0,366.0 L896.0,376.2 L900.0,388.3 L904.0,400.3 L908.0,413.8 L912.0,427.3 L916.0,441.7 M568.0,462.7 L572.0,435.6 L576.0,416.6 L580.0,400.7 L584.0,387.9 L588.0,375.2 L592.0,365.9 L596.0,356.7 L600.0,347.4 L604.0,339.3 L608.0,331.3 L612.0,323.0 L616.0,314.7 L620.0,306.5 L624.0,301.7 L628.0,296.9 L632.0,292.2 L636.0,287.6 L640.0,283.3 L644.0,279.1 L648.0,274.8 L652.0,270.9 L656.0,267.2 L660.0,263.5 L664.0,259.8 L668.0,256.1 L672.0,252.4 L676.0,248.7 L680.0,245.0 L684.0,242.4 L688.0,239.7 L692.0,237.0 L696.0,234.4 L700.0,231.9 L704.0,229.3 L708.0,226.8 L712.0,224.9 L716.0,223.4 L720.0,221.8 L724.0,220.3 L728.0,218.8 L732.0,217.3 L736.0,215.8 L740.0,214.6 L744.0,215.6 L748.0,216.6 L752.0,217.6 L756.0,218.6 L760.0,219.6 L764.0,220.5 L768.0,221.5 L772.0,224.0 L776.0,226.4 L780.0,228.8 L784.0,231.1 L788.0,233.4 L792.0,235.7 L796.0,238.1 L800.0,241.0 L804.0,243.8 L808.0,246.6 L812.0,249.4 L816.0,252.9 L820.0,256.5 L824.0,260.2 L828.0,263.8 L832.0,267.8 L836.0,272.1 L840.0,276.3 L844.0,280.6 L848.0,284.9 L852.0,289.3 L856.0,293.6 L860.0,298.0 L864.0,305.3 L868.0,313.2 L872.0,322.0 L876.0,331.6 L880.0,339.8 L884.0,347.6 L888.0,356.4 L892.0,365.7 L896.0,375.4 L900.0,386.9 L904.0,398.4 L908.0,411.3 L912.0,424.2 L916.0,437.9 M568.0,457.8 L572.0,432.0 L576.0,413.8 L580.0,398.7 L584.0,386.6 L588.0,374.4 L592.0,365.6 L596.0,356.8 L600.0,347.9 L604.0,340.2 L608.0,332.6 L612.0,324.7 L616.0,316.8 L620.0,308.9 L624.0,304.4 L628.0,299.8 L632.0,295.3 L636.0,290.9 L640.0,286.9 L644.0,282.8 L648.0,278.8 L652.0,275.0 L656.0,271.5 L660.0,268.0 L664.0,264.5 L668.0,260.9 L672.0,257.4 L676.0,253.9 L680.0,250.4 L684.0,247.9 L688.0,245.3 L692.0,242.8 L696.0,240.3 L700.0,237.8 L704.0,235.4 L708.0,233.0 L712.0,231.2 L716.0,229.7 L720.0,228.3 L724.0,226.9 L728.0,225.4 L732.0,224.0 L736.0,222.6 L740.0,221.4 L744.0,222.4 L748.0,223.3 L752.0,224.2 L756.0,225.2 L760.0,226.1 L764.0,227.1 L768.0,228.0 L772.0,230.3 L776.0,232.6 L780.0,234.9 L784.0,237.1 L788.0,239.3 L792.0,241.5 L796.0,243.8 L800.0,246.5 L804.0,249.2 L808.0,251.9 L812.0,254.6 L816.0,257.9 L820.0,261.3 L824.0,264.8 L828.0,268.3 L832.0,272.1 L836.0,276.2 L840.0,280.2 L844.0,284.2 L848.0,288.4 L852.0,292.6 L856.0,296.7 L860.0,300.9 L864.0,307.8 L868.0,315.3 L872.0,323.7 L876.0,332.8 L880.0,340.7 L884.0,348.1 L888.0,356.5 L892.0,365.3 L896.0,374.7 L900.0,385.6 L904.0,396.5 L908.0,408.8 L912.0,421.2 L916.0,434.2 M568.0,452.9 L572.0,428.4 L576.0,411.1 L580.0,396.7 L584.0,385.2 L588.0,373.7 L592.0,365.3 L596.0,356.9 L600.0,348.5 L604.0,341.2 L608.0,333.9 L612.0,326.4 L616.0,318.9 L620.0,311.4 L624.0,307.1 L628.0,302.8 L632.0,298.4 L636.0,294.3 L640.0,290.4 L644.0,286.6 L648.0,282.7 L652.0,279.2 L656.0,275.8 L660.0,272.5 L664.0,269.1 L668.0,265.8 L672.0,262.4 L676.0,259.0 L680.0,255.8 L684.0,253.3 L688.0,250.9 L692.0,248.5 L696.0,246.1 L700.0,243.8 L704.0,241.5 L708.0,239.2 L712.0,237.5 L716.0,236.1 L720.0,234.8 L724.0,233.4 L728.0,232.0 L732.0,230.7 L736.0,229.3 L740.0,228.2 L744.0,229.1 L748.0,230.0 L752.0,230.9 L756.0,231.8 L760.0,232.7 L764.0,233.6 L768.0,234.5 L772.0,236.7 L776.0,238.9 L780.0,241.1 L784.0,243.1 L788.0,245.2 L792.0,247.3 L796.0,249.5 L800.0,252.1 L804.0,254.6 L808.0,257.2 L812.0,259.7 L816.0,262.9 L820.0,266.2 L824.0,269.4 L828.0,272.7 L832.0,276.4 L836.0,280.3 L840.0,284.1 L844.0,287.9 L848.0,291.9 L852.0,295.8 L856.0,299.8 L860.0,303.7 L864.0,310.3 L868.0,317.5 L872.0,325.5 L876.0,334.1 L880.0,341.6 L884.0,348.6 L888.0,356.6 L892.0,365.0 L896.0,373.9 L900.0,384.3 L904.0,394.7 L908.0,406.4 L912.0,418.1 L916.0,430.5" stroke="#2b2627" stroke-width="2.6" stroke-dasharray="2.6 1.4" fill="none"/></g>
<path d="M739.5,166.7 C734.4,168.1 717.1,172.6 709.6,175.2 C702.1,177.8 699.6,179.9 694.6,182.4 C689.6,184.9 684.7,186.9 679.7,189.9 C674.7,192.9 669.7,196.9 664.7,200.4 C659.7,203.9 654.8,207.1 649.8,210.8 C644.8,214.5 639.8,218.6 634.8,222.8 C629.8,227.0 624.1,231.2 619.9,236.2 C615.7,241.2 612.7,247.6 609.4,252.7 C606.1,257.8 603.6,261.1 600.0,267.0 C596.4,272.9 591.7,280.5 588.0,288.0 C584.3,295.5 580.9,303.5 578.0,312.0 C575.1,320.5 572.3,331.0 570.5,339.0 C568.7,347.0 567.8,349.0 567.0,360.0 C566.2,371.0 565.6,391.7 565.5,405.0 C565.4,418.3 566.3,429.7 566.5,440.0 C566.7,450.3 565.8,460.7 566.5,467.0 C567.2,473.3 568.1,474.7 570.7,478.0 C573.3,481.3 578.0,484.3 582.0,487.0 C586.0,489.7 590.9,490.7 595.0,494.0 C599.1,497.3 603.7,503.2 606.5,507.0 C609.3,510.8 609.4,512.5 612.0,517.0 C614.6,521.5 618.8,528.5 622.0,534.0 C625.2,539.5 628.3,545.2 631.0,550.0 C633.7,554.8 636.1,559.5 638.0,563.0 C639.9,566.5 641.9,568.7 642.4,571.0 C642.9,573.3 641.3,573.7 640.8,577.0 C640.3,580.3 639.0,586.2 639.6,591.0 C640.2,595.8 641.6,601.9 644.4,605.5 C647.2,609.1 638.9,610.9 656.5,612.7 C674.1,614.5 718.8,616.3 750.0,616.3 C781.2,616.3 826.1,614.9 844.0,612.7 C861.9,610.5 854.5,606.6 857.3,603.0 C860.1,599.4 860.8,595.3 861.0,591.0 C861.2,586.7 859.6,580.2 858.5,577.0 C857.4,573.8 853.8,575.4 854.6,572.0 C855.5,568.6 860.2,562.5 863.6,556.5 C867.0,550.5 871.2,542.9 874.8,536.3 C878.4,529.7 882.4,521.5 885.0,517.0 C887.6,512.5 888.5,512.6 890.5,509.4 C892.5,506.2 894.8,501.6 897.0,498.0 C899.2,494.4 901.3,490.6 904.0,488.0 C906.7,485.4 909.7,485.4 913.0,482.6 C916.3,479.8 921.4,475.2 924.0,471.4 C926.6,467.6 928.6,465.2 928.6,460.0 C928.6,454.8 924.9,449.2 924.0,440.0 C923.1,430.8 923.7,418.3 923.0,405.0 C922.3,391.7 920.8,370.8 920.0,360.0 C919.2,349.2 919.3,346.3 918.0,340.5 C916.7,334.7 914.3,330.8 912.0,325.0 C909.7,319.2 906.8,312.0 904.0,305.5 C901.2,299.0 898.2,292.1 895.0,286.0 C891.8,279.9 888.0,273.4 885.0,268.6 C882.0,263.8 879.8,261.4 877.2,257.2 C874.7,253.0 872.5,248.2 869.7,243.7 C867.0,239.2 864.9,234.8 860.7,230.3 C856.5,225.8 849.5,221.1 844.3,216.8 C839.1,212.6 834.5,208.7 829.3,204.8 C824.1,200.9 818.7,197.1 813.0,193.6 C807.3,190.1 800.5,186.7 795.0,184.0 C789.5,181.3 784.5,179.5 780.0,177.5 C775.5,175.5 774.6,173.8 768.0,172.0 C761.4,170.2 745.2,167.6 740.5,166.7 C735.8,165.8 744.6,165.3 739.5,166.7Z" fill="none" stroke="#da1f3d" stroke-width="10"/>
<path d="M590.0,266.0 L617.0,244.0 L714.0,227.0 L714.0,262.0 L640.0,266.0Z" fill="url(#or_big)"/>
<path d="M770.0,227.0 L864.0,244.0 L890.0,270.0 L850.0,263.0 L770.0,260.0Z" fill="url(#orr_big)"/>
<path d="M712.0,227.0 L772.0,227.0 L772.0,262.0 L712.0,262.0Z" fill="url(#br_big)"/>
<path d="M600,250 Q740,218 880,250" stroke="#da1f3d" stroke-width="4" fill="none"/>
<path d="M640.0,266.0 L690.0,261.0 L714.0,259.0 L714.0,343.0 L592.0,343.0Z" fill="url(#og_big)"/>
<path d="M770.0,259.0 L800.0,259.0 L856.0,263.0 L882.0,343.0 L770.0,343.0Z" fill="url(#ogr_big)"/>
<path d="M700.0,258.0 L741.0,258.0 L741.0,340.0 L700.0,340.0Z" fill="url(#bg_big)"/>
<path d="M741.0,258.0 L790.0,258.0 L790.0,340.0 L741.0,340.0Z" fill="url(#bgr_big)"/>
<path d="M560.0,300.0 L602.0,268.0 L642.0,266.0 L594.0,343.0 L560.0,343.0Z" fill="url(#rg_big)"/>
<path d="M855.0,263.0 L888.0,272.0 L935.0,300.0 L935.0,343.0 L880.0,343.0Z" fill="url(#rgr_big)"/>
<path d="M560,339 Q740,335 935,339" stroke="#2b2627" stroke-width="3.5" fill="none"/>
<path d="M560,342 Q740,338.5 935,342" stroke="#c9b9b0" stroke-width="1" fill="none" opacity="0.5"/>
<path d="M594.0,342.0 L694.0,342.0 L694.0,472.0 L594.0,470.0Z" fill="url(#od_big)"/>
<path d="M789.0,342.0 L890.0,341.0 L890.0,470.0 L789.0,472.0Z" fill="url(#odr_big)"/>
<path d="M694.0,341.0 L789.0,341.0 L789.0,472.0 L694.0,472.0Z" fill="url(#bsq_big)"/>
<path d="M560.0,341.0 L594.0,342.0 L594.0,470.0 L560.0,466.0Z" fill="url(#rb_big)"/>
<path d="M889.0,341.0 L935.0,341.0 L935.0,470.0 L889.0,470.0Z" fill="url(#rbr_big)"/>
<path d="M592,344 L592,470 M891,344 L891,470" stroke="#2b2627" stroke-width="4.5" opacity="0.9"/>
<path d="M560,347 Q740,344 935,347" stroke="#23b44b" stroke-width="1.1" fill="none" opacity="0.5"/>
<path d="M560.0,455.0 L600.0,468.0 L694.0,472.0 L694.0,500.0 L560.0,490.0Z" fill="url(#opu_big)"/>
<path d="M789.0,472.0 L890.0,468.0 L935.0,456.0 L935.0,490.0 L789.0,500.0Z" fill="url(#opu_big)"/>
<path d="M560.0,488.0 L694.0,498.0 L700.0,523.0 L650.0,518.0 L560.0,512.0Z" fill="url(#op_big)"/>
<path d="M789.0,498.0 L935.0,488.0 L935.0,512.0 L850.0,518.0 L789.0,522.0Z" fill="url(#opr_big)"/>
<path d="M694.0,472.0 L789.0,472.0 L789.0,522.0 L694.0,523.0Z" fill="url(#bp_big)"/>
<path d="M575,482 Q748,485 922,481" stroke="#23b44b" stroke-width="1.6" fill="none" opacity="0.9"/>
<path d="M560.0,512.0 L650.0,518.0 L700.0,523.0 L700.0,578.0 L560.0,578.0Z" fill="url(#opk_big)"/>
<path d="M790.0,521.0 L850.0,518.0 L935.0,510.0 L935.0,578.0 L790.0,578.0Z" fill="url(#opkr_big)"/>
<path d="M698.0,523.0 L749.0,524.0 L749.0,578.0 L698.0,578.0Z" fill="url(#bpk_big)"/>
<path d="M749.0,524.0 L790.0,521.0 L790.0,578.0 L749.0,578.0Z" fill="url(#bpkr_big)"/>
<path d="M615.0,520 L641,571" stroke="#d6306a" stroke-width="8" opacity="0.75" stroke-dasharray="3 2.5"/>
<path d="M883.0,520 L857,571" stroke="#d6306a" stroke-width="8" opacity="0.75" stroke-dasharray="3 2.5"/>
<path d="M641.0,572.0 C651.0,570.2 682.2,571.3 700.0,571.0 C717.8,570.7 731.3,570.0 748.0,570.0 C764.7,570.0 781.7,570.7 800.0,571.0 C818.3,571.3 847.8,570.2 858.0,572.0 C868.2,573.8 860.5,578.8 861.0,582.0 C861.5,585.2 861.6,587.5 861.0,591.0 C860.4,594.5 860.1,599.4 857.3,603.0 C854.5,606.6 861.9,610.5 844.0,612.7 C826.1,614.9 781.2,616.3 750.0,616.3 C718.8,616.3 674.1,614.5 656.5,612.7 C638.9,610.9 647.2,609.1 644.4,605.5 C641.6,601.9 640.3,594.9 639.6,591.0 C638.9,587.1 639.8,585.2 640.0,582.0 C640.2,578.8 631.0,573.8 641.0,572.0Z" fill="url(#rbase_big)"/>
<path d="M650,608 Q750,620 850,608" stroke="#fb8e12" stroke-width="3" fill="none" opacity="0.8" stroke-dasharray="3 2.5"/>
<path d="M644,604 Q660,611 680,612 M820,612 Q842,610 856,603" stroke="#2b2627" stroke-width="3" fill="none" opacity="0.7" stroke-dasharray="3 3"/>
<path d="M640,571 L712,570 L712,585.5 L640,585.5Z" fill="url(#zz_big)" opacity="0.95"/>
<path d="M786,570 L860,571 L860,585.5 L786,585.5Z" fill="url(#zz_big)" opacity="0.95"/>
<path d="M710,570 L788,570 L788,586 L710,586Z" fill="url(#zzb_big)" opacity="0.9"/></g><path d="M592,489 C597,520 612,550 644,572" stroke="#a8142c" stroke-width="4.8" fill="none" stroke-linecap="round"/>
<path d="M592,489 C597,520 612,550 644,572" stroke="#d4223c" stroke-width="3" fill="none" stroke-linecap="round"/>
<path d="M902,487 C902,522 884,552 854,572" stroke="#a8142c" stroke-width="4.8" fill="none" stroke-linecap="round"/>
<path d="M902,487 C902,522 884,552 854,572" stroke="#d4223c" stroke-width="3" fill="none" stroke-linecap="round"/>
<path d="M748.5,493 L748.5,583" stroke="#a8142c" stroke-width="5" fill="none"/>
<path d="M748.5,493 L748.5,583" stroke="#d4223c" stroke-width="3" fill="none"/>
<path d="M740,143.5 L740,168" stroke="#4a2222" stroke-width="3" fill="none" stroke-linecap="round"/>
<path d="M740.5,169 L742,227" stroke="#a8142c" stroke-width="6" fill="none"/>
<path d="M740.5,169 L742,227" stroke="#da1f3d" stroke-width="4" fill="none"/></svg></div>
  <div class="a" style="left:208px;top:57.5px;width:75px;height:19.5px;box-sizing:border-box;background:#efefef;border:0.5px solid #cfcfcf;box-shadow:0 1px 3px rgba(0,0,0,0.25)"></div>
  <div class="a" style="left:213.5px;top:60.2px;font-size:11.8px;line-height:14px;color:#111;white-space:nowrap">Surbrillance</div>
</div>
</body></html>
